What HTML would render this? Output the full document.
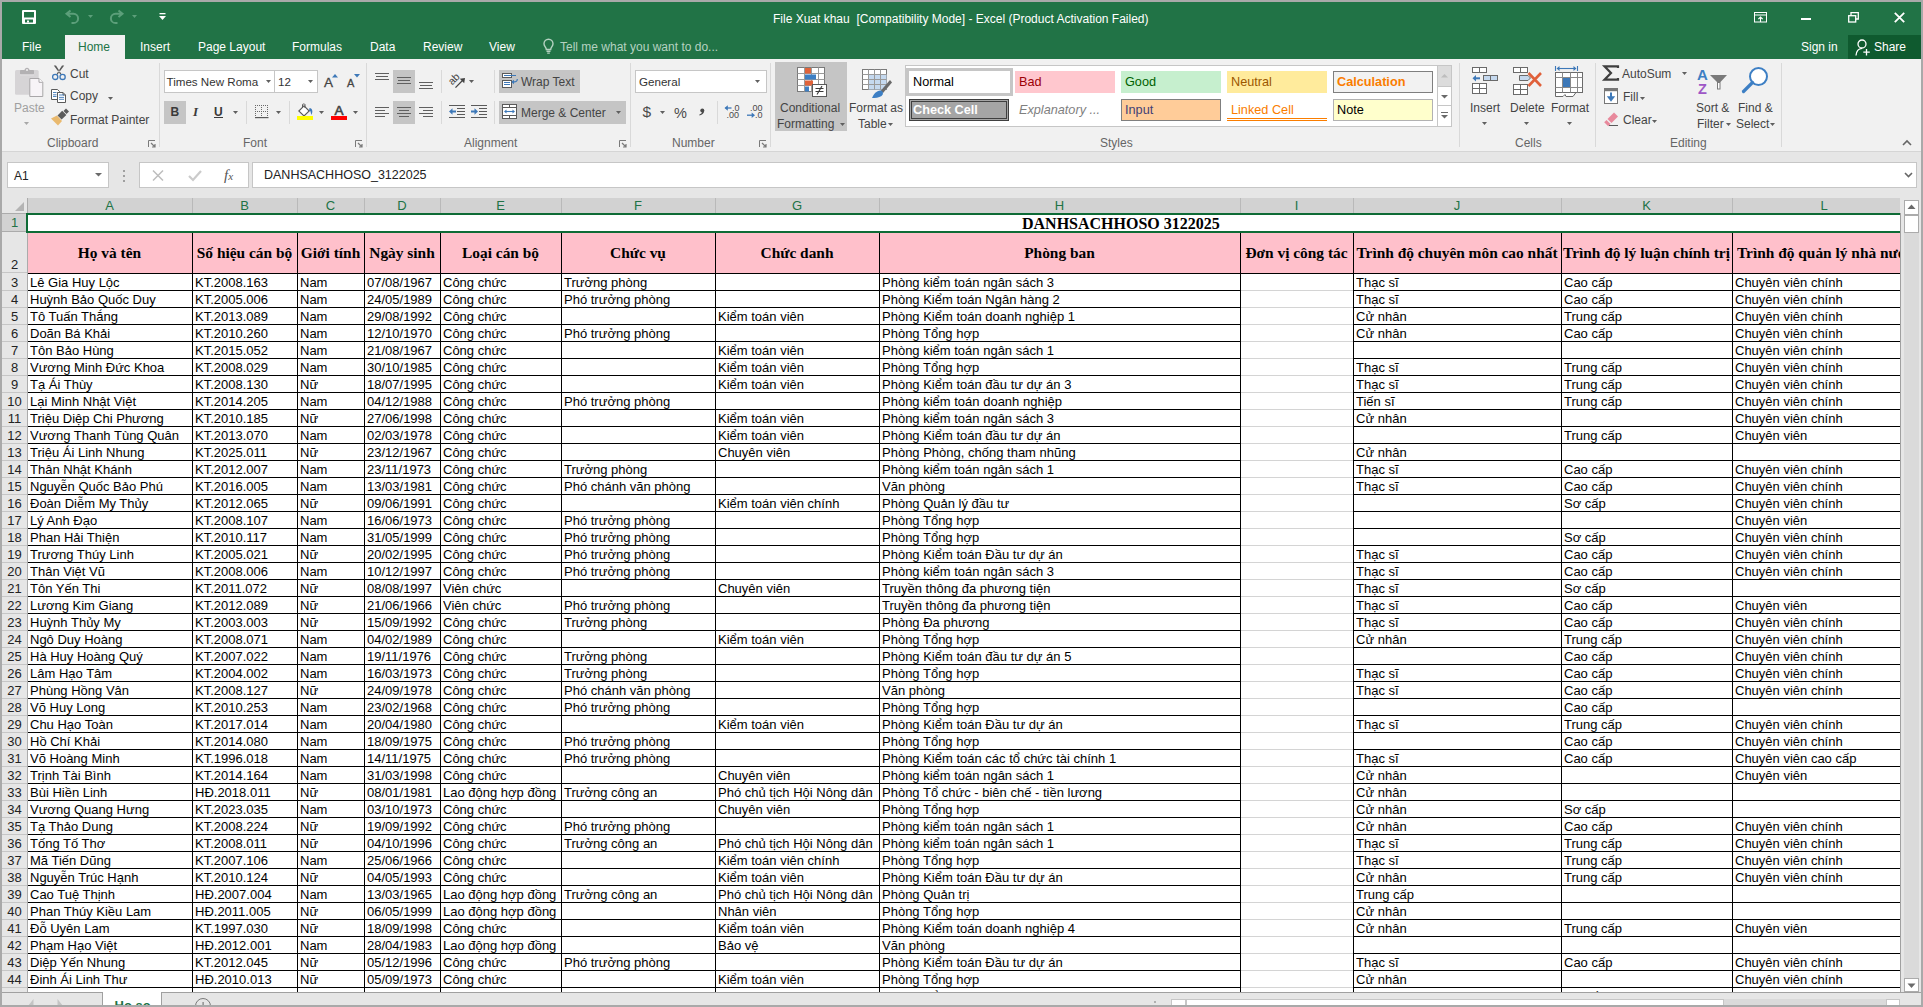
<!DOCTYPE html><html><head><meta charset="utf-8"><style>
html,body{margin:0;padding:0;}
body{width:1923px;height:1007px;overflow:hidden;position:relative;background:#a9a9a9;font-family:"Liberation Sans",sans-serif;}
.t{position:absolute;white-space:pre;}
.r{position:absolute;}
.s{position:absolute;overflow:visible;}
</style></head><body>
<div class="r" style="left:2px;top:2px;width:1919px;height:57px;background:#217346;"></div>
<div class="r" style="left:2px;top:59px;width:1919px;height:92px;background:#f1f1f1;"></div>
<div class="r" style="left:2px;top:151px;width:1919px;height:1px;background:#d5d5d5;"></div>
<div class="r" style="left:2px;top:152px;width:1919px;height:46px;background:#e6e6e6;"></div>
<div class="t" style="left:773px;top:12.84px;font-size:12px;line-height:12px;color:#ffffff;font-weight:normal;font-family:'Liberation Sans', sans-serif;font-style:normal;">File Xuat khau  [Compatibility Mode] - Excel (Product Activation Failed)</div>
<div class="r" style="left:65px;top:35px;width:60px;height:24px;background:#f1f1f1;"></div>
<div class="t" style="left:22px;top:40.84px;font-size:12px;line-height:12px;color:#fff;font-weight:normal;font-family:'Liberation Sans', sans-serif;font-style:normal;">File</div>
<div class="t" style="left:78px;top:40.84px;font-size:12px;line-height:12px;color:#217346;font-weight:normal;font-family:'Liberation Sans', sans-serif;font-style:normal;">Home</div>
<div class="t" style="left:140px;top:40.84px;font-size:12px;line-height:12px;color:#fff;font-weight:normal;font-family:'Liberation Sans', sans-serif;font-style:normal;">Insert</div>
<div class="t" style="left:198px;top:40.84px;font-size:12px;line-height:12px;color:#fff;font-weight:normal;font-family:'Liberation Sans', sans-serif;font-style:normal;">Page Layout</div>
<div class="t" style="left:292px;top:40.84px;font-size:12px;line-height:12px;color:#fff;font-weight:normal;font-family:'Liberation Sans', sans-serif;font-style:normal;">Formulas</div>
<div class="t" style="left:370px;top:40.84px;font-size:12px;line-height:12px;color:#fff;font-weight:normal;font-family:'Liberation Sans', sans-serif;font-style:normal;">Data</div>
<div class="t" style="left:423px;top:40.84px;font-size:12px;line-height:12px;color:#fff;font-weight:normal;font-family:'Liberation Sans', sans-serif;font-style:normal;">Review</div>
<div class="t" style="left:489px;top:40.84px;font-size:12px;line-height:12px;color:#fff;font-weight:normal;font-family:'Liberation Sans', sans-serif;font-style:normal;">View</div>
<div class="t" style="left:560px;top:40.84px;font-size:12px;line-height:12px;color:#b5d2c1;font-weight:normal;font-family:'Liberation Sans', sans-serif;font-style:normal;">Tell me what you want to do...</div>
<div class="t" style="left:1801px;top:40.84px;font-size:12px;line-height:12px;color:#fff;font-weight:normal;font-family:'Liberation Sans', sans-serif;font-style:normal;">Sign in</div>
<div class="r" style="left:1848px;top:35px;width:73px;height:24px;background:#0f5a2f;"></div>
<div class="t" style="left:1874px;top:40.84px;font-size:12px;line-height:12px;color:#fff;font-weight:normal;font-family:'Liberation Sans', sans-serif;font-style:normal;">Share</div>
<svg class="s" style="left:22px;top:10px;" width="14" height="14" viewBox="0 0 14 14"><rect x="0" y="0" width="14" height="14" rx="1" fill="#fff"/><rect x="2" y="2" width="10" height="5.5" fill="#217346"/><rect x="3" y="9.5" width="8" height="3" fill="#217346"/><rect x="5" y="10.5" width="2" height="2" fill="#fff"/></svg>
<svg class="s" style="left:65px;top:10px;" width="15" height="14" viewBox="0 0 15 14"><path d="M5.5,0.5 L1.5,3.8 L5.5,7.1 M1.5,3.8 H8.5 A4.6,4.6 0 0 1 8.5,13 H6.5" fill="none" stroke="#5c9f7a" stroke-width="2"/></svg>
<svg class="s" style="left:88px;top:15px;" width="5" height="3" viewBox="0 0 5 3"><polygon points="0,0 5,0 2.5,3" fill="#5c9f7a"/></svg>
<svg class="s" style="left:109px;top:10px;" width="15" height="14" viewBox="0 0 15 14"><path d="M9.5,0.5 L13.5,3.8 L9.5,7.1 M13.5,3.8 H6.5 A4.6,4.6 0 0 0 6.5,13 H8.5" fill="none" stroke="#5c9f7a" stroke-width="2"/></svg>
<svg class="s" style="left:132px;top:15px;" width="5" height="3" viewBox="0 0 5 3"><polygon points="0,0 5,0 2.5,3" fill="#5c9f7a"/></svg>
<svg class="s" style="left:159px;top:13px;" width="7" height="8" viewBox="0 0 7 8"><rect x="0.5" y="0" width="6" height="1.3" fill="#fff"/><polygon points="0,3 7,3 3.5,7" fill="#fff"/></svg>
<svg class="s" style="left:1754px;top:12px;" width="14" height="11" viewBox="0 0 14 11"><rect x="0.5" y="0.5" width="12" height="9.5" fill="none" stroke="#fff" stroke-width="1"/><path d="M0.5,3 H12.5" stroke="#fff" stroke-width="1"/><path d="M6.5,10 V5 M4.3,7.2 L6.5,5 L8.7,7.2" fill="none" stroke="#fff" stroke-width="1.1"/></svg>
<div class="r" style="left:1801px;top:18px;width:10px;height:2px;background:#fff;"></div>
<svg class="s" style="left:1848px;top:12px;" width="11" height="11" viewBox="0 0 11 11"><rect x="0.7" y="3.7" width="7" height="6.3" fill="none" stroke="#fff" stroke-width="1.3"/><path d="M3,3.5 V0.7 H10.3 V7 H7.8" fill="none" stroke="#fff" stroke-width="1.3"/></svg>
<svg class="s" style="left:1894px;top:12px;" width="11" height="11" viewBox="0 0 11 11"><path d="M0.8,0.8 L10.2,10.2 M10.2,0.8 L0.8,10.2" stroke="#fff" stroke-width="1.8"/></svg>
<svg class="s" style="left:543px;top:39px;" width="11" height="15" viewBox="0 0 11 15"><path d="M3.3,10.5 C3.3,8.3 1,7.5 1,4.8 A4.5,4.5 0 0 1 10,4.8 C10,7.5 7.7,8.3 7.7,10.5 Z" fill="none" stroke="#b5d2c1" stroke-width="1.4"/><path d="M3.5,12.3 H7.5 M4.2,14.1 H6.8" stroke="#b5d2c1" stroke-width="1.4"/></svg>
<svg class="s" style="left:1855px;top:39px;" width="16" height="17" viewBox="0 0 16 17"><circle cx="7" cy="5" r="4" fill="none" stroke="#fff" stroke-width="1.3"/><path d="M1,16.5 C1.3,12 3.5,9.6 7,9.3" fill="none" stroke="#fff" stroke-width="1.3"/><path d="M11.5,10 V16.5 M8.3,13.2 H14.8" stroke="#fff" stroke-width="1.3"/></svg>
<svg class="s" style="left:14px;top:66px;" width="31" height="32" viewBox="0 0 31 32"><rect x="1" y="4" width="23.7" height="24.7" rx="1.5" fill="#d6d4d6"/><rect x="6" y="4" width="14" height="4.5" rx="0.8" fill="#b3b1b3"/><rect x="6" y="8.5" width="14" height="0.8" fill="#e6e4e6"/><path d="M10.5,4.5 C10.5,0.8 15.5,0.8 15.5,4.5 Z" fill="#b3b1b3"/><circle cx="13" cy="4" r="1" fill="#f1f1f1"/><path d="M15.8,12.5 H25 L28.8,16.3 V30.5 H15.8 Z" fill="#f7f4f7" stroke="#a9a7a9" stroke-width="1"/><path d="M25,12.5 V16.3 H28.8" fill="#fff" stroke="#a9a7a9" stroke-width="1"/></svg>
<div class="t" style="left:14px;top:101.84px;font-size:12px;line-height:12px;color:#a0a0a0;font-weight:normal;font-family:'Liberation Sans', sans-serif;font-style:normal;">Paste</div>
<svg class="s" style="left:24px;top:122px;" width="5" height="3" viewBox="0 0 5 3"><polygon points="0,0 5,0 2.5,3" fill="#a8a8a8"/></svg>
<svg class="s" style="left:51px;top:64px;" width="17" height="17" viewBox="0 0 17 17"><path d="M2.8,1.5 L5,1.5 L10.6,10.2 L9.6,10.8 Z M13.2,1.5 L11,1.5 L5.4,10.2 L6.4,10.8 Z" fill="#5a5a5a"/><circle cx="4.2" cy="12.9" r="2.6" fill="none" stroke="#3d78b8" stroke-width="1.3"/><circle cx="11.6" cy="12.9" r="2.6" fill="none" stroke="#3d78b8" stroke-width="1.3"/></svg>
<div class="t" style="left:70px;top:67.84px;font-size:12px;line-height:12px;color:#444444;font-weight:normal;font-family:'Liberation Sans', sans-serif;font-style:normal;">Cut</div>
<svg class="s" style="left:50px;top:88px;" width="17" height="16" viewBox="0 0 17 16"><path d="M1.5,11.5 V1.5 H7.5 L9.5,3.5 V4.5 H7.5 V11.5 H1.5 Z" fill="#fff" stroke="#5a5a5a" stroke-width="1"/><path d="M7.5,4.5 H13 L15.5,7 V14.5 H7.5 Z" fill="#fff" stroke="#5a5a5a" stroke-width="1"/><path d="M13,4.5 V7 H15.5" fill="none" stroke="#5a5a5a" stroke-width="1"/><path d="M3,4.5 H6.5 M3,6.8 H6.5 M3,8.5 H6.5 M9,7 H14 M9,9.4 H14 M9,11.3 H14" stroke="#3d78b8" stroke-width="0.9"/></svg>
<div class="t" style="left:70px;top:89.84px;font-size:12px;line-height:12px;color:#444444;font-weight:normal;font-family:'Liberation Sans', sans-serif;font-style:normal;">Copy</div>
<svg class="s" style="left:108px;top:97px;" width="5" height="3" viewBox="0 0 5 3"><polygon points="0,0 5,0 2.5,3" fill="#5f5f5f"/></svg>
<svg class="s" style="left:48px;top:108px;" width="24" height="22" viewBox="0 0 24 22"><polygon points="3,10.5 9,7.5 14,13 10,17.5" fill="#e9b96e"/><polygon points="9.5,7.5 14.2,2.8 18.4,7 13.6,11.6" fill="#5c5c5c"/><polygon points="15.5,3 18,0.5 21,3.5 18.5,6" fill="#5c5c5c"/></svg>
<div class="t" style="left:70px;top:113.84px;font-size:12px;line-height:12px;color:#444444;font-weight:normal;font-family:'Liberation Sans', sans-serif;font-style:normal;">Format Painter</div>
<div class="t" style="left:47px;top:136.84px;font-size:12px;line-height:12px;color:#666666;font-weight:normal;font-family:'Liberation Sans', sans-serif;font-style:normal;">Clipboard</div>
<svg class="s" style="left:148px;top:140px;" width="8" height="8" viewBox="0 0 8 8"><path d="M0.5,7 V0.5 H7" fill="none" stroke="#7a7a7a" stroke-width="1"/><path d="M3,3 L7,7 M7,4 V7 H4" fill="none" stroke="#7a7a7a" stroke-width="1.2"/></svg>
<div class="r" style="left:159px;top:63px;width:1px;height:84px;background:#d9d9d9;"></div>
<div class="r" style="left:164px;top:70px;width:111px;height:23px;background:#fff;box-sizing:border-box;border:1px solid #c6c6c6;"></div>
<div class="r" style="left:274px;top:70px;width:44px;height:23px;background:#fff;box-sizing:border-box;border:1px solid #c6c6c6;"></div>
<div class="t" style="left:166.5px;top:76.18px;font-size:11.6px;line-height:11.6px;color:#333;font-weight:normal;font-family:'Liberation Sans', sans-serif;font-style:normal;">Times New Roma</div>
<svg class="s" style="left:266px;top:80px;" width="5" height="3" viewBox="0 0 5 3"><polygon points="0,0 5,0 2.5,3" fill="#5f5f5f"/></svg>
<div class="t" style="left:278px;top:76.18px;font-size:11.6px;line-height:11.6px;color:#333;font-weight:normal;font-family:'Liberation Sans', sans-serif;font-style:normal;">12</div>
<svg class="s" style="left:308px;top:80px;" width="5" height="3" viewBox="0 0 5 3"><polygon points="0,0 5,0 2.5,3" fill="#5f5f5f"/></svg>
<div class="t" style="left:324px;top:75.57px;font-size:13.5px;line-height:13.5px;color:#444444;font-weight:normal;font-family:'Liberation Sans', sans-serif;font-style:normal;-webkit-text-stroke:0.3px #444;">A</div>
<svg class="s" style="left:332px;top:73.5px;" width="6" height="4" viewBox="0 0 6 4"><polygon points="0,3.5 6,3.5 3,0" fill="#3d78b8"/></svg>
<div class="t" style="left:347px;top:77.69px;font-size:11px;line-height:11px;color:#444444;font-weight:normal;font-family:'Liberation Sans', sans-serif;font-style:normal;-webkit-text-stroke:0.3px #444;">A</div>
<svg class="s" style="left:354px;top:74px;" width="6" height="4" viewBox="0 0 6 4"><polygon points="0,0 6,0 3,3.5" fill="#3d78b8"/></svg>
<div class="r" style="left:164px;top:101px;width:22px;height:23px;background:#c5c5c5;"></div>
<div class="t" style="left:170.5px;top:105.84px;font-size:12px;line-height:12px;color:#3a3a3a;font-weight:bold;font-family:'Liberation Sans', sans-serif;font-style:normal;">B</div>
<div class="t" style="left:193px;top:105.11px;font-size:13px;line-height:13px;color:#3a3a3a;font-weight:bold;font-family:'Liberation Serif', serif;font-style:italic;">I</div>
<div class="t" style="left:214px;top:105.84px;font-size:12px;line-height:12px;color:#3a3a3a;font-weight:bold;font-family:'Liberation Sans', sans-serif;font-style:normal;">U</div>
<div class="r" style="left:214px;top:117px;width:9px;height:1px;background:#3a3a3a;"></div>
<svg class="s" style="left:233px;top:111px;" width="5" height="3" viewBox="0 0 5 3"><polygon points="0,0 5,0 2.5,3" fill="#5f5f5f"/></svg>
<div class="r" style="left:246px;top:101px;width:1px;height:23px;background:#d9d9d9;"></div>
<svg class="s" style="left:255px;top:105px;" width="14" height="14" viewBox="0 0 14 14"><rect x="0" y="0" width="1" height="1" fill="#6a6a6a"/><rect x="0" y="6" width="1" height="1" fill="#6a6a6a"/><rect x="2" y="0" width="1" height="1" fill="#6a6a6a"/><rect x="2" y="6" width="1" height="1" fill="#6a6a6a"/><rect x="4" y="0" width="1" height="1" fill="#6a6a6a"/><rect x="4" y="6" width="1" height="1" fill="#6a6a6a"/><rect x="6" y="0" width="1" height="1" fill="#6a6a6a"/><rect x="6" y="6" width="1" height="1" fill="#6a6a6a"/><rect x="8" y="0" width="1" height="1" fill="#6a6a6a"/><rect x="8" y="6" width="1" height="1" fill="#6a6a6a"/><rect x="10" y="0" width="1" height="1" fill="#6a6a6a"/><rect x="10" y="6" width="1" height="1" fill="#6a6a6a"/><rect x="12" y="0" width="1" height="1" fill="#6a6a6a"/><rect x="12" y="6" width="1" height="1" fill="#6a6a6a"/><rect x="0" y="2" width="1" height="1" fill="#6a6a6a"/><rect x="6" y="2" width="1" height="1" fill="#6a6a6a"/><rect x="12" y="2" width="1" height="1" fill="#6a6a6a"/><rect x="0" y="4" width="1" height="1" fill="#6a6a6a"/><rect x="6" y="4" width="1" height="1" fill="#6a6a6a"/><rect x="12" y="4" width="1" height="1" fill="#6a6a6a"/><rect x="0" y="6" width="1" height="1" fill="#6a6a6a"/><rect x="6" y="6" width="1" height="1" fill="#6a6a6a"/><rect x="12" y="6" width="1" height="1" fill="#6a6a6a"/><rect x="0" y="8" width="1" height="1" fill="#6a6a6a"/><rect x="6" y="8" width="1" height="1" fill="#6a6a6a"/><rect x="12" y="8" width="1" height="1" fill="#6a6a6a"/><rect x="0" y="10" width="1" height="1" fill="#6a6a6a"/><rect x="6" y="10" width="1" height="1" fill="#6a6a6a"/><rect x="12" y="10" width="1" height="1" fill="#6a6a6a"/><rect x="0" y="12" width="13.5" height="1.2" fill="#5a5a5a"/></svg>
<svg class="s" style="left:276px;top:111px;" width="5" height="3" viewBox="0 0 5 3"><polygon points="0,0 5,0 2.5,3" fill="#5f5f5f"/></svg>
<div class="r" style="left:289px;top:101px;width:1px;height:23px;background:#d9d9d9;"></div>
<svg class="s" style="left:296px;top:103px;" width="18" height="13" viewBox="0 0 18 13"><path d="M8,2.8 L2.8,8 L8,13 L13.2,8 Z" fill="#fff" stroke="#5a5a5a" stroke-width="1.1"/><path d="M6.5,5 V1.5 C6.5,0.8 9,0.8 9,1.5 V5" fill="none" stroke="#5a5a5a" stroke-width="1"/><path d="M13.5,5 C16.5,5.5 17.3,8.5 15.3,12 L14.5,8.3 L13,8 Z" fill="#3d78b8"/></svg>
<div class="r" style="left:297px;top:116px;width:16px;height:4px;background:#ffff00;"></div>
<svg class="s" style="left:319px;top:111px;" width="5" height="3" viewBox="0 0 5 3"><polygon points="0,0 5,0 2.5,3" fill="#5f5f5f"/></svg>
<div class="t" style="left:334.5px;top:104.07px;font-size:13.5px;line-height:13.5px;color:#444;font-weight:normal;font-family:'Liberation Sans', sans-serif;font-style:normal;-webkit-text-stroke:0.6px #444;">A</div>
<div class="r" style="left:331px;top:116px;width:16px;height:4px;background:#ff0000;"></div>
<svg class="s" style="left:353px;top:111px;" width="5" height="3" viewBox="0 0 5 3"><polygon points="0,0 5,0 2.5,3" fill="#5f5f5f"/></svg>
<div class="t" style="left:243px;top:136.84px;font-size:12px;line-height:12px;color:#666666;font-weight:normal;font-family:'Liberation Sans', sans-serif;font-style:normal;">Font</div>
<svg class="s" style="left:355px;top:140px;" width="8" height="8" viewBox="0 0 8 8"><path d="M0.5,7 V0.5 H7" fill="none" stroke="#7a7a7a" stroke-width="1"/><path d="M3,3 L7,7 M7,4 V7 H4" fill="none" stroke="#7a7a7a" stroke-width="1.2"/></svg>
<div class="r" style="left:366px;top:63px;width:1px;height:84px;background:#d9d9d9;"></div>
<div class="r" style="left:393px;top:70px;width:22px;height:23px;background:#c5c5c5;"></div>
<div class="r" style="left:393px;top:101px;width:22px;height:23px;background:#c5c5c5;"></div>
<svg class="s" style="left:375px;top:0px;" width="16" height="130" viewBox="0 0 16 130"><rect x="0" y="73" width="14" height="1" fill="#606060"/><rect x="1" y="76" width="12" height="1" fill="#606060"/><rect x="0" y="79" width="14" height="1" fill="#606060"/></svg>
<svg class="s" style="left:397px;top:0px;" width="16" height="130" viewBox="0 0 16 130"><rect x="0" y="77" width="14" height="1" fill="#606060"/><rect x="1" y="80" width="12" height="1" fill="#606060"/><rect x="0" y="83" width="14" height="1" fill="#606060"/></svg>
<svg class="s" style="left:419px;top:0px;" width="16" height="130" viewBox="0 0 16 130"><rect x="0" y="82" width="14" height="1" fill="#606060"/><rect x="1" y="85" width="12" height="1" fill="#606060"/><rect x="0" y="88" width="14" height="1" fill="#606060"/></svg>
<svg class="s" style="left:375px;top:0px;" width="16" height="130" viewBox="0 0 16 130"><rect x="0" y="107" width="14" height="1" fill="#606060"/><rect x="0" y="110" width="10" height="1" fill="#606060"/><rect x="0" y="113" width="14" height="1" fill="#606060"/><rect x="0" y="116" width="10" height="1" fill="#606060"/></svg>
<svg class="s" style="left:397px;top:0px;" width="16" height="130" viewBox="0 0 16 130"><rect x="0" y="107" width="14" height="1" fill="#606060"/><rect x="2" y="110" width="10" height="1" fill="#606060"/><rect x="0" y="113" width="14" height="1" fill="#606060"/><rect x="2" y="116" width="10" height="1" fill="#606060"/></svg>
<svg class="s" style="left:419px;top:0px;" width="16" height="130" viewBox="0 0 16 130"><rect x="0" y="107" width="14" height="1" fill="#606060"/><rect x="4" y="110" width="10" height="1" fill="#606060"/><rect x="0" y="113" width="14" height="1" fill="#606060"/><rect x="4" y="116" width="10" height="1" fill="#606060"/></svg>
<div class="r" style="left:441px;top:70px;width:1px;height:23px;background:#d9d9d9;"></div>
<div class="r" style="left:441px;top:101px;width:1px;height:23px;background:#d9d9d9;"></div>
<svg class="s" style="left:448px;top:72px;" width="18" height="17" viewBox="0 0 18 17"><text x="0" y="0" transform="translate(4.2,13.6) rotate(-45)" font-family="Liberation Sans" font-size="10.5" fill="#444">ab</text><path d="M7.5,15.6 L15,8" fill="none" stroke="#444" stroke-width="1.3"/><path d="M17,6 L11.8,6.8 L16.2,11.2 Z" fill="#444"/></svg>
<svg class="s" style="left:469px;top:80px;" width="5" height="3" viewBox="0 0 5 3"><polygon points="0,0 5,0 2.5,3" fill="#5f5f5f"/></svg>
<div class="r" style="left:494px;top:70px;width:1px;height:23px;background:#d9d9d9;"></div>
<div class="r" style="left:494px;top:101px;width:1px;height:23px;background:#d9d9d9;"></div>
<svg class="s" style="left:449px;top:104px;" width="17" height="15" viewBox="0 0 17 15"><path d="M0,1.5 H16 M8,4.5 H16 M8,7.5 H16 M8,10.5 H16 M0,13.5 H16" stroke="#5a5a5a" stroke-width="1"/><path d="M2.5,7.5 H7" stroke="#3d78b8" stroke-width="2"/><path d="M0,7.5 L3.5,4.2 V10.8 Z" fill="#3d78b8"/></svg>
<svg class="s" style="left:471px;top:104px;" width="17" height="15" viewBox="0 0 17 15"><path d="M0,1.5 H16 M8,4.5 H16 M8,7.5 H16 M8,10.5 H16 M0,13.5 H16" stroke="#5a5a5a" stroke-width="1"/><path d="M0,7.5 H4.5" stroke="#3d78b8" stroke-width="2"/><path d="M7,7.5 L3.5,4.2 V10.8 Z" fill="#3d78b8"/></svg>
<div class="r" style="left:499px;top:70px;width:81px;height:23px;background:#c5c5c5;"></div>
<svg class="s" style="left:502px;top:73px;" width="17" height="16" viewBox="0 0 17 16"><rect x="0.5" y="0.5" width="9" height="4" fill="#fff" stroke="#5a5a5a"/><rect x="0.5" y="7.5" width="9" height="7" fill="#fff" stroke="#5a5a5a"/><path d="M2,2.5 H14 M2,9.5 H8 M2,11.5 H8" stroke="#3d78b8" stroke-width="1"/><path d="M15.3,6 C15.5,8.5 13.5,9 10.5,9" fill="none" stroke="#3d78b8" stroke-width="1.2"/><path d="M9.3,9 L12,6.8 L12,11.2 Z" fill="#3d78b8"/></svg>
<div class="t" style="left:521px;top:75.84px;font-size:12px;line-height:12px;color:#444444;font-weight:normal;font-family:'Liberation Sans', sans-serif;font-style:normal;">Wrap Text</div>
<div class="r" style="left:499px;top:101px;width:127px;height:23px;background:#c5c5c5;"></div>
<svg class="s" style="left:502px;top:104px;" width="16" height="15" viewBox="0 0 16 15"><rect x="0.5" y="0.5" width="14" height="14" fill="#fff" stroke="#5a5a5a"/><path d="M0.5,3.5 H14.5 M0.5,11.5 H14.5 M7.5,0.5 V3.5 M7.5,11.5 V14.5" stroke="#5a5a5a" stroke-width="1"/><path d="M3.5,7.5 H11.5" stroke="#3d78b8" stroke-width="1.1"/><path d="M2,7.5 L4.5,5.5 V9.5 Z M13,7.5 L10.5,5.5 V9.5 Z" fill="#3d78b8"/></svg>
<div class="t" style="left:521px;top:106.84px;font-size:12px;line-height:12px;color:#444444;font-weight:normal;font-family:'Liberation Sans', sans-serif;font-style:normal;">Merge &amp; Center</div>
<svg class="s" style="left:616px;top:111px;" width="5" height="3" viewBox="0 0 5 3"><polygon points="0,0 5,0 2.5,3" fill="#5f5f5f"/></svg>
<div class="t" style="left:464px;top:136.84px;font-size:12px;line-height:12px;color:#666666;font-weight:normal;font-family:'Liberation Sans', sans-serif;font-style:normal;">Alignment</div>
<svg class="s" style="left:619px;top:140px;" width="8" height="8" viewBox="0 0 8 8"><path d="M0.5,7 V0.5 H7" fill="none" stroke="#7a7a7a" stroke-width="1"/><path d="M3,3 L7,7 M7,4 V7 H4" fill="none" stroke="#7a7a7a" stroke-width="1.2"/></svg>
<div class="r" style="left:630px;top:63px;width:1px;height:84px;background:#d9d9d9;"></div>
<div class="r" style="left:635px;top:70px;width:132px;height:23px;background:#fff;box-sizing:border-box;border:1px solid #c6c6c6;"></div>
<div class="t" style="left:639px;top:76.18px;font-size:11.6px;line-height:11.6px;color:#333;font-weight:normal;font-family:'Liberation Sans', sans-serif;font-style:normal;">General</div>
<svg class="s" style="left:755px;top:80px;" width="5" height="3" viewBox="0 0 5 3"><polygon points="0,0 5,0 2.5,3" fill="#5f5f5f"/></svg>
<div class="t" style="left:642.5px;top:104.38px;font-size:15.5px;line-height:15.5px;color:#4a4a4a;font-weight:normal;font-family:'Liberation Sans', sans-serif;font-style:normal;">$</div>
<svg class="s" style="left:660px;top:111px;" width="5" height="3" viewBox="0 0 5 3"><polygon points="0,0 5,0 2.5,3" fill="#5f5f5f"/></svg>
<div class="t" style="left:674px;top:105.73px;font-size:14.5px;line-height:14.5px;color:#4a4a4a;font-weight:normal;font-family:'Liberation Sans', sans-serif;font-style:normal;">%</div>
<svg class="s" style="left:698px;top:108px;" width="7" height="8" viewBox="0 0 7 8"><circle cx="4.3" cy="2.6" r="2" fill="#4a4a4a"/><path d="M6.2,2.8 C6.2,5 4.5,6.8 1.5,7.5 L1.2,6.8 C3,6 4,5 4.2,3.8 Z" fill="#4a4a4a"/></svg>
<div class="r" style="left:717px;top:101px;width:1px;height:23px;background:#d9d9d9;"></div>
<svg class="s" style="left:724px;top:104px;" width="17" height="15" viewBox="0 0 17 15"><text x="8" y="7" font-family="Liberation Sans" font-size="9" fill="#4a4a4a">.0</text><text x="2.5" y="14.2" font-family="Liberation Sans" font-size="9" fill="#4a4a4a">.00</text><path d="M1.5,4 H7.5" stroke="#3d78b8" stroke-width="1.3"/><path d="M0.5,4 L3.8,1.2 V6.8 Z" fill="#3d78b8"/></svg>
<svg class="s" style="left:746px;top:104px;" width="17" height="15" viewBox="0 0 17 15"><text x="4" y="7" font-family="Liberation Sans" font-size="9" fill="#4a4a4a">.00</text><text x="9" y="14.2" font-family="Liberation Sans" font-size="9" fill="#4a4a4a">.0</text><path d="M1,11.2 H7" stroke="#3d78b8" stroke-width="1.3"/><path d="M9,11.2 L5.7,8.4 V14 Z" fill="#3d78b8"/></svg>
<div class="t" style="left:672px;top:136.84px;font-size:12px;line-height:12px;color:#666666;font-weight:normal;font-family:'Liberation Sans', sans-serif;font-style:normal;">Number</div>
<svg class="s" style="left:759px;top:140px;" width="8" height="8" viewBox="0 0 8 8"><path d="M0.5,7 V0.5 H7" fill="none" stroke="#7a7a7a" stroke-width="1"/><path d="M3,3 L7,7 M7,4 V7 H4" fill="none" stroke="#7a7a7a" stroke-width="1.2"/></svg>
<div class="r" style="left:770px;top:63px;width:1px;height:84px;background:#d9d9d9;"></div>
<div class="r" style="left:775px;top:62px;width:72px;height:69px;background:#c5c5c5;"></div>
<svg class="s" style="left:797px;top:67px;" width="30" height="30" viewBox="0 0 30 30"><rect x="0.5" y="0.5" width="27" height="24" fill="#fff" stroke="#7a7a7a"/><rect x="7" y="0.5" width="1" height="24" fill="#9a9a9a"/><rect x="14" y="0.5" width="1" height="24" fill="#9a9a9a"/><rect x="21" y="0.5" width="1" height="24" fill="#9a9a9a"/><rect x="0.5" y="6" width="27" height="1" fill="#9a9a9a"/><rect x="0.5" y="12" width="27" height="1" fill="#9a9a9a"/><rect x="0.5" y="18" width="27" height="1" fill="#9a9a9a"/><rect x="8" y="1" width="6" height="5.5" fill="#e0633a"/><rect x="8" y="7.5" width="11" height="5" fill="#3d7fc4"/><rect x="8" y="13.5" width="8" height="5" fill="#e0633a"/><rect x="8" y="19.5" width="4" height="5" fill="#3d7fc4"/><rect x="15.5" y="17.5" width="14" height="12" fill="#fff" stroke="#5a5a5a"/><path d="M18.5,21.5 H26.5 M18.5,24.5 H26.5 M25,19 L20,27.5" stroke="#3a3a3a" stroke-width="1.1"/></svg>
<div class="t" style="left:780px;top:101.84px;font-size:12px;line-height:12px;color:#444444;font-weight:normal;font-family:'Liberation Sans', sans-serif;font-style:normal;">Conditional</div>
<div class="t" style="left:777px;top:117.84px;font-size:12px;line-height:12px;color:#444444;font-weight:normal;font-family:'Liberation Sans', sans-serif;font-style:normal;">Formatting</div>
<svg class="s" style="left:840px;top:123px;" width="5" height="3" viewBox="0 0 5 3"><polygon points="0,0 5,0 2.5,3" fill="#5f5f5f"/></svg>
<svg class="s" style="left:862px;top:69px;" width="30" height="29" viewBox="0 0 30 29"><rect x="0.5" y="0.5" width="24" height="20" fill="#fff" stroke="#7a7a7a"/><rect x="6.5" y="5.5" width="18" height="15" fill="#c5d9ef"/><rect x="6" y="0.5" width="1" height="20" fill="#9a9a9a"/><rect x="12" y="0.5" width="1" height="20" fill="#9a9a9a"/><rect x="18" y="0.5" width="1" height="20" fill="#9a9a9a"/><rect x="0.5" y="5" width="24" height="1" fill="#9a9a9a"/><rect x="0.5" y="10" width="24" height="1" fill="#9a9a9a"/><rect x="0.5" y="15" width="24" height="1" fill="#9a9a9a"/><path d="M18.5,22 L28,11 L30,13.5 L21,24 Z" fill="#6a6a6a"/><path d="M10,29 C11.5,25 15,21 19,21.5 C21.5,22.5 21.5,25.5 19.5,27 C17,28.8 13,29 10,29 Z" fill="#3d7fc4"/></svg>
<div class="t" style="left:849px;top:101.84px;font-size:12px;line-height:12px;color:#444444;font-weight:normal;font-family:'Liberation Sans', sans-serif;font-style:normal;">Format as</div>
<div class="t" style="left:858px;top:117.84px;font-size:12px;line-height:12px;color:#444444;font-weight:normal;font-family:'Liberation Sans', sans-serif;font-style:normal;">Table</div>
<svg class="s" style="left:888px;top:123px;" width="5" height="3" viewBox="0 0 5 3"><polygon points="0,0 5,0 2.5,3" fill="#5f5f5f"/></svg>
<div class="r" style="left:905px;top:65px;width:533px;height:62px;background:#fff;box-sizing:border-box;border:1px solid #c6c6c6;"></div>
<div class="r" style="left:906px;top:68px;width:107px;height:28px;background:#fff;box-sizing:border-box;border:3px solid #c6c6c6;"></div>
<div class="t" style="left:913px;top:76.25px;font-size:12.7px;line-height:12.7px;color:#000;font-weight:normal;font-family:'Liberation Sans', sans-serif;font-style:normal;">Normal</div>
<div class="r" style="left:1015px;top:71px;width:100px;height:22px;background:#ffc7ce;"></div>
<div class="t" style="left:1019px;top:76.25px;font-size:12.7px;line-height:12.7px;color:#9c0006;font-weight:normal;font-family:'Liberation Sans', sans-serif;font-style:normal;">Bad</div>
<div class="r" style="left:1121px;top:71px;width:100px;height:22px;background:#c6efce;"></div>
<div class="t" style="left:1125px;top:76.25px;font-size:12.7px;line-height:12.7px;color:#006100;font-weight:normal;font-family:'Liberation Sans', sans-serif;font-style:normal;">Good</div>
<div class="r" style="left:1227px;top:71px;width:100px;height:22px;background:#ffeb9c;"></div>
<div class="t" style="left:1231px;top:76.25px;font-size:12.7px;line-height:12.7px;color:#9c5700;font-weight:normal;font-family:'Liberation Sans', sans-serif;font-style:normal;">Neutral</div>
<div class="r" style="left:1333px;top:71px;width:100px;height:22px;background:#f2f2f2;box-sizing:border-box;border:1px solid #7f7f7f;"></div>
<div class="t" style="left:1337px;top:76.25px;font-size:12.7px;line-height:12.7px;color:#fa7d00;font-weight:bold;font-family:'Liberation Sans', sans-serif;font-style:normal;">Calculation</div>
<div class="r" style="left:909px;top:99px;width:100px;height:22px;background:#a5a5a5;box-sizing:border-box;border:3px double #3f3f3f;"></div>
<div class="t" style="left:913px;top:104.25px;font-size:12.7px;line-height:12.7px;color:#fff;font-weight:bold;font-family:'Liberation Sans', sans-serif;font-style:normal;">Check Cell</div>
<div class="t" style="left:1019px;top:104.25px;font-size:12.7px;line-height:12.7px;color:#7f7f7f;font-weight:normal;font-family:'Liberation Sans', sans-serif;font-style:italic;">Explanatory ...</div>
<div class="r" style="left:1121px;top:99px;width:100px;height:22px;background:#ffcc99;box-sizing:border-box;border:1px solid #7f7f7f;"></div>
<div class="t" style="left:1125px;top:104.25px;font-size:12.7px;line-height:12.7px;color:#3f3f76;font-weight:normal;font-family:'Liberation Sans', sans-serif;font-style:normal;">Input</div>
<div class="t" style="left:1231px;top:104.25px;font-size:12.7px;line-height:12.7px;color:#fa7d00;font-weight:normal;font-family:'Liberation Sans', sans-serif;font-style:normal;">Linked Cell</div>
<div class="r" style="left:1227px;top:118px;width:100px;height:1px;background:#fa7d00;"></div>
<div class="r" style="left:1227px;top:120px;width:100px;height:1px;background:#fa7d00;"></div>
<div class="r" style="left:1333px;top:99px;width:100px;height:22px;background:#ffffcc;box-sizing:border-box;border:1px solid #b2b2b2;"></div>
<div class="t" style="left:1337px;top:104.25px;font-size:12.7px;line-height:12.7px;color:#000;font-weight:normal;font-family:'Liberation Sans', sans-serif;font-style:normal;">Note</div>
<div class="r" style="left:1437px;top:65px;width:15px;height:62px;background:#fff;box-sizing:border-box;border:1px solid #c6c6c6;"></div>
<div class="r" style="left:1438px;top:66px;width:13px;height:20px;background:#dcdcdc;"></div>
<div class="r" style="left:1438px;top:86px;width:13px;height:1px;background:#c6c6c6;"></div>
<div class="r" style="left:1438px;top:105px;width:13px;height:1px;background:#c6c6c6;"></div>
<svg class="s" style="left:1441px;top:74px;" width="7" height="4" viewBox="0 0 7 4"><polygon points="0,3.5 7,3.5 3.5,0" fill="#bdbdbd"/></svg>
<svg class="s" style="left:1441px;top:95px;" width="7" height="4" viewBox="0 0 7 4"><polygon points="0,0 7,0 3.5,3.5" fill="#6a6a6a"/></svg>
<svg class="s" style="left:1441px;top:112px;" width="7" height="8" viewBox="0 0 7 8"><rect x="0" y="0" width="7" height="1" fill="#6a6a6a"/><polygon points="0,3 7,3 3.5,6.5" fill="#6a6a6a"/></svg>
<div class="t" style="left:1100px;top:136.84px;font-size:12px;line-height:12px;color:#666666;font-weight:normal;font-family:'Liberation Sans', sans-serif;font-style:normal;">Styles</div>
<div class="r" style="left:1459px;top:63px;width:1px;height:84px;background:#d9d9d9;"></div>
<svg class="s" style="left:1471px;top:66px;" width="28" height="29" viewBox="0 0 28 29"><rect x="1.5" y="1.5" width="14" height="5" fill="#fff" stroke="#6a6a6a"/><path d="M8.5,1.5 V6.5" stroke="#6a6a6a"/><rect x="12.5" y="9.5" width="14" height="5" fill="#c5d9ef" stroke="#6a6a6a"/><path d="M19.5,9.5 V14.5" stroke="#6a6a6a"/><path d="M4,12.3 H9" fill="none" stroke="#3d78b8" stroke-width="2"/><path d="M1.5,12.3 L5,9 V15.6 Z" fill="#3d78b8"/><rect x="1.5" y="17.5" width="14" height="10" fill="#fff" stroke="#6a6a6a"/><path d="M8.5,17.5 V27.5 M1.5,22.5 H15.5" stroke="#6a6a6a"/></svg>
<div class="t" style="left:1470px;top:101.84px;font-size:12px;line-height:12px;color:#444444;font-weight:normal;font-family:'Liberation Sans', sans-serif;font-style:normal;">Insert</div>
<svg class="s" style="left:1482px;top:122px;" width="5" height="3" viewBox="0 0 5 3"><polygon points="0,0 5,0 2.5,3" fill="#5f5f5f"/></svg>
<svg class="s" style="left:1512px;top:66px;" width="31" height="30" viewBox="0 0 31 30"><rect x="1.5" y="1.5" width="14" height="5" fill="#fff" stroke="#6a6a6a"/><path d="M8.5,1.5 V6.5" stroke="#6a6a6a"/><path d="M7.5,9.5 H16 L18.5,12 L16,14.5 H7.5 Z" fill="#c5d9ef" stroke="#6a6a6a"/><rect x="1.5" y="18.5" width="14" height="10" fill="#fff" stroke="#6a6a6a"/><path d="M8.5,18.5 V28.5 M1.5,23.5 H15.5" stroke="#6a6a6a"/><path d="M16.5,7 L29,20 M29,7 L16.5,20" stroke="#e0603a" stroke-width="2.6"/></svg>
<div class="t" style="left:1510px;top:101.84px;font-size:12px;line-height:12px;color:#444444;font-weight:normal;font-family:'Liberation Sans', sans-serif;font-style:normal;">Delete</div>
<svg class="s" style="left:1524px;top:122px;" width="5" height="3" viewBox="0 0 5 3"><polygon points="0,0 5,0 2.5,3" fill="#5f5f5f"/></svg>
<svg class="s" style="left:1554px;top:65px;" width="30" height="33" viewBox="0 0 30 33"><path d="M1.5,1 V6 M23.5,1 V6" stroke="#3d78b8" stroke-width="1.1"/><path d="M4,3.5 H21" stroke="#3d78b8" stroke-width="1.1"/><path d="M2.5,3.5 L5.5,1 V6 Z M22.5,3.5 L19.5,1 V6 Z" fill="#3d78b8"/><path d="M1.5,27.5 V31.5 H9 L11,29.5 L12,31.5 H19 L22,27.5" fill="#fff" stroke="#6a6a6a"/><rect x="1.5" y="7.5" width="27" height="20" fill="#fff" stroke="#6a6a6a"/><path d="M8.5,7.5 V27.5" stroke="#8a8a8a"/><path d="M16.5,7.5 V27.5" stroke="#8a8a8a"/><path d="M23.5,7.5 V27.5" stroke="#8a8a8a"/><path d="M1.5,12.5 H28.5" stroke="#8a8a8a"/><path d="M1.5,22.5 H28.5" stroke="#8a8a8a"/><rect x="9" y="13" width="7" height="9" fill="#3d78b8"/></svg>
<div class="t" style="left:1551px;top:101.84px;font-size:12px;line-height:12px;color:#444444;font-weight:normal;font-family:'Liberation Sans', sans-serif;font-style:normal;">Format</div>
<svg class="s" style="left:1567px;top:122px;" width="5" height="3" viewBox="0 0 5 3"><polygon points="0,0 5,0 2.5,3" fill="#5f5f5f"/></svg>
<div class="t" style="left:1515px;top:136.84px;font-size:12px;line-height:12px;color:#666666;font-weight:normal;font-family:'Liberation Sans', sans-serif;font-style:normal;">Cells</div>
<div class="r" style="left:1595px;top:63px;width:1px;height:84px;background:#d9d9d9;"></div>
<svg class="s" style="left:1603px;top:65px;" width="16" height="16" viewBox="0 0 16 16"><path d="M15,3 V1.3 H1.5 L8,8 L1.5,14.7 H15 V13" fill="none" stroke="#3f3f3f" stroke-width="2.2"/></svg>
<div class="t" style="left:1622px;top:67.84px;font-size:12px;line-height:12px;color:#444444;font-weight:normal;font-family:'Liberation Sans', sans-serif;font-style:normal;">AutoSum</div>
<svg class="s" style="left:1682px;top:72px;" width="5" height="3" viewBox="0 0 5 3"><polygon points="0,0 5,0 2.5,3" fill="#5f5f5f"/></svg>
<svg class="s" style="left:1604px;top:88px;" width="15" height="17" viewBox="0 0 15 17"><rect x="0.5" y="0.5" width="13" height="15" fill="#fff" stroke="#777" stroke-width="1"/><rect x="0" y="0" width="14" height="3.2" fill="#777"/><path d="M7,4.5 V10" stroke="#3d78b8" stroke-width="2"/><path d="M2.8,8.3 L11.2,8.3 L7,13.8 Z" fill="#3d78b8"/></svg>
<div class="t" style="left:1623px;top:90.84px;font-size:12px;line-height:12px;color:#444444;font-weight:normal;font-family:'Liberation Sans', sans-serif;font-style:normal;">Fill</div>
<svg class="s" style="left:1640px;top:97px;" width="5" height="3" viewBox="0 0 5 3"><polygon points="0,0 5,0 2.5,3" fill="#5f5f5f"/></svg>
<svg class="s" style="left:1603px;top:111px;" width="16" height="15" viewBox="0 0 16 15"><path d="M4.5,8 L11,1.5 L15,5.5 L8.5,12 Z" fill="#e8899c"/><path d="M1.2,11.3 L3.5,9 L7.5,13 L5.2,15.3 Z" fill="#e8899c"/><path d="M6,14.5 H15" stroke="#5a5a5a" stroke-width="1"/></svg>
<div class="t" style="left:1623px;top:113.84px;font-size:12px;line-height:12px;color:#444444;font-weight:normal;font-family:'Liberation Sans', sans-serif;font-style:normal;">Clear</div>
<svg class="s" style="left:1652px;top:120px;" width="5" height="3" viewBox="0 0 5 3"><polygon points="0,0 5,0 2.5,3" fill="#5f5f5f"/></svg>
<svg class="s" style="left:1697px;top:67px;" width="32" height="28" viewBox="0 0 32 28"><text x="0" y="12.5" font-family="Liberation Sans" font-weight="bold" font-size="15" fill="#3d7fc4">A</text><text x="1" y="27" font-family="Liberation Sans" font-weight="bold" font-size="14.5" fill="#9e57c6">Z</text><path d="M13,8 H30 L23.5,15 V22.5 H20 V15 Z" fill="#7a7a7a"/><path d="M21,16 V21.5 H22.5 V16" fill="#fff"/></svg>
<div class="t" style="left:1696px;top:101.84px;font-size:12px;line-height:12px;color:#444444;font-weight:normal;font-family:'Liberation Sans', sans-serif;font-style:normal;">Sort &amp;</div>
<div class="t" style="left:1697px;top:117.84px;font-size:12px;line-height:12px;color:#444444;font-weight:normal;font-family:'Liberation Sans', sans-serif;font-style:normal;">Filter</div>
<svg class="s" style="left:1726px;top:123px;" width="5" height="3" viewBox="0 0 5 3"><polygon points="0,0 5,0 2.5,3" fill="#5f5f5f"/></svg>
<svg class="s" style="left:1741px;top:66px;" width="29" height="29" viewBox="0 0 29 29"><circle cx="17.5" cy="10.5" r="8.5" fill="#fff" stroke="#3d7fc4" stroke-width="2"/><path d="M11.5,16.5 L2.5,25.5" stroke="#3d7fc4" stroke-width="3.2" stroke-linecap="round"/></svg>
<div class="t" style="left:1738px;top:101.84px;font-size:12px;line-height:12px;color:#444444;font-weight:normal;font-family:'Liberation Sans', sans-serif;font-style:normal;">Find &amp;</div>
<div class="t" style="left:1736px;top:117.84px;font-size:12px;line-height:12px;color:#444444;font-weight:normal;font-family:'Liberation Sans', sans-serif;font-style:normal;">Select</div>
<svg class="s" style="left:1770px;top:123px;" width="5" height="3" viewBox="0 0 5 3"><polygon points="0,0 5,0 2.5,3" fill="#5f5f5f"/></svg>
<div class="t" style="left:1670px;top:136.84px;font-size:12px;line-height:12px;color:#666666;font-weight:normal;font-family:'Liberation Sans', sans-serif;font-style:normal;">Editing</div>
<div class="r" style="left:1781px;top:63px;width:1px;height:84px;background:#d9d9d9;"></div>
<svg class="s" style="left:1902px;top:139px;" width="10" height="7" viewBox="0 0 10 7"><path d="M1,6 L5,2 L9,6" fill="none" stroke="#666" stroke-width="1.6"/></svg>
<div class="r" style="left:7px;top:162px;width:102px;height:26px;background:#fff;box-sizing:border-box;border:1px solid #c6c6c6;"></div>
<div class="t" style="left:14px;top:169.84px;font-size:12px;line-height:12px;color:#222;font-weight:normal;font-family:'Liberation Sans', sans-serif;font-style:normal;">A1</div>
<div class="r" style="left:139px;top:162px;width:110px;height:26px;background:#fff;box-sizing:border-box;border:1px solid #c6c6c6;"></div>
<div class="r" style="left:252px;top:162px;width:1665px;height:26px;background:#fff;box-sizing:border-box;border:1px solid #c6c6c6;"></div>
<div class="t" style="left:264px;top:169.42px;font-size:12.5px;line-height:12.5px;color:#222;font-weight:normal;font-family:'Liberation Sans', sans-serif;font-style:normal;">DANHSACHHOSO_3122025</div>
<svg class="s" style="left:95px;top:173px;" width="7" height="4" viewBox="0 0 7 4"><polygon points="0,0 7,0 3.5,3.5" fill="#6a6a6a"/></svg>
<div class="r" style="left:123px;top:170px;width:2px;height:2px;background:#a0a0a0;"></div>
<div class="r" style="left:123px;top:175px;width:2px;height:2px;background:#a0a0a0;"></div>
<div class="r" style="left:123px;top:180px;width:2px;height:2px;background:#a0a0a0;"></div>
<svg class="s" style="left:152px;top:170px;" width="12" height="11" viewBox="0 0 12 11"><path d="M1,0.5 L11,10.5 M11,0.5 L1,10.5" stroke="#bdbdbd" stroke-width="1.5"/></svg>
<svg class="s" style="left:188px;top:170px;" width="14" height="11" viewBox="0 0 14 11"><path d="M1,6 L5,10 L13,1" fill="none" stroke="#cbcbcb" stroke-width="2.2"/></svg>
<div class="t" style="left:224px;top:168px;font-size:15px;line-height:14px;font-family:'Liberation Serif',serif;font-style:italic;color:#555;">f<span style="font-size:11px;">x</span></div>
<svg class="s" style="left:1904px;top:172px;" width="9" height="6" viewBox="0 0 9 6"><path d="M1,1 L4.5,4.5 L8,1" fill="none" stroke="#666" stroke-width="1.6"/></svg>
<div class="r" style="left:2px;top:198px;width:1898px;height:794px;background:#ffffff;"></div>
<div class="r" style="left:2px;top:198px;width:25px;height:794px;background:#e6e6e6;"></div>
<div class="r" style="left:2px;top:198px;width:25px;height:15px;background:#e6e6e6;"></div>
<div class="r" style="left:27px;top:198px;width:1873px;height:15px;background:#d2d2d2;"></div>
<div class="r" style="left:28px;top:233px;width:1872px;height:40px;background:#ffc0cb;"></div>
<div class="t" style="left:27px;top:199px;width:165px;text-align:center;font-size:13px;line-height:13px;color:#217346;">A</div>
<div class="r" style="left:192px;top:198px;width:1px;height:15px;background:#b9b9b9;"></div>
<div class="t" style="left:192px;top:199px;width:105px;text-align:center;font-size:13px;line-height:13px;color:#217346;">B</div>
<div class="r" style="left:297px;top:198px;width:1px;height:15px;background:#b9b9b9;"></div>
<div class="t" style="left:297px;top:199px;width:67px;text-align:center;font-size:13px;line-height:13px;color:#217346;">C</div>
<div class="r" style="left:364px;top:198px;width:1px;height:15px;background:#b9b9b9;"></div>
<div class="t" style="left:364px;top:199px;width:76px;text-align:center;font-size:13px;line-height:13px;color:#217346;">D</div>
<div class="r" style="left:440px;top:198px;width:1px;height:15px;background:#b9b9b9;"></div>
<div class="t" style="left:440px;top:199px;width:121px;text-align:center;font-size:13px;line-height:13px;color:#217346;">E</div>
<div class="r" style="left:561px;top:198px;width:1px;height:15px;background:#b9b9b9;"></div>
<div class="t" style="left:561px;top:199px;width:154px;text-align:center;font-size:13px;line-height:13px;color:#217346;">F</div>
<div class="r" style="left:715px;top:198px;width:1px;height:15px;background:#b9b9b9;"></div>
<div class="t" style="left:715px;top:199px;width:164px;text-align:center;font-size:13px;line-height:13px;color:#217346;">G</div>
<div class="r" style="left:879px;top:198px;width:1px;height:15px;background:#b9b9b9;"></div>
<div class="t" style="left:879px;top:199px;width:361px;text-align:center;font-size:13px;line-height:13px;color:#217346;">H</div>
<div class="r" style="left:1240px;top:198px;width:1px;height:15px;background:#b9b9b9;"></div>
<div class="t" style="left:1240px;top:199px;width:113px;text-align:center;font-size:13px;line-height:13px;color:#217346;">I</div>
<div class="r" style="left:1353px;top:198px;width:1px;height:15px;background:#b9b9b9;"></div>
<div class="t" style="left:1353px;top:199px;width:208px;text-align:center;font-size:13px;line-height:13px;color:#217346;">J</div>
<div class="r" style="left:1561px;top:198px;width:1px;height:15px;background:#b9b9b9;"></div>
<div class="t" style="left:1561px;top:199px;width:171px;text-align:center;font-size:13px;line-height:13px;color:#217346;">K</div>
<div class="r" style="left:1732px;top:198px;width:1px;height:15px;background:#b9b9b9;"></div>
<div class="t" style="left:1732px;top:199px;width:184px;text-align:center;font-size:13px;line-height:13px;color:#217346;">L</div>
<div class="r" style="left:1900px;top:198px;width:1px;height:15px;background:#b9b9b9;"></div>
<div class="r" style="left:27px;top:198px;width:1px;height:794px;background:#ababab;"></div>
<svg class="s" style="left:15px;top:202px;" width="10" height="10" viewBox="0 0 10 10"><polygon points="9,0 9,9 0,9" fill="#b4b4b4"/></svg>
<div class="r" style="left:2px;top:213px;width:25px;height:18px;background:#d2d2d2;"></div>
<div class="r" style="left:2px;top:213px;width:25px;height:1px;background:#ababab;"></div>
<div class="r" style="left:2px;top:231px;width:25px;height:1px;background:#ababab;"></div>
<div class="t" style="left:2px;top:216px;width:25px;text-align:center;font-size:13px;line-height:13px;color:#217346;">1</div>
<div class="r" style="left:2px;top:272px;width:25px;height:1px;background:#c6c6c6;"></div>
<div class="t" style="left:2px;top:258px;width:25px;text-align:center;font-size:13px;line-height:13px;color:#222;">2</div>
<div class="t" style="left:1022px;top:216px;font-size:16px;line-height:16px;font-weight:bold;font-family:'Liberation Serif', serif;color:#000;">DANHSACHHOSO 3122025</div>
<div class="t" style="left:27px;top:245px;width:165px;text-align:center;font-size:15.4px;line-height:16px;font-weight:bold;font-family:'Liberation Serif', serif;color:#000;">Họ và tên</div>
<div class="t" style="left:192px;top:245px;width:105px;text-align:center;font-size:15.4px;line-height:16px;font-weight:bold;font-family:'Liberation Serif', serif;color:#000;">Số hiệu cán bộ</div>
<div class="t" style="left:297px;top:245px;width:67px;text-align:center;font-size:15.4px;line-height:16px;font-weight:bold;font-family:'Liberation Serif', serif;color:#000;">Giới tính</div>
<div class="t" style="left:364px;top:245px;width:76px;text-align:center;font-size:15.4px;line-height:16px;font-weight:bold;font-family:'Liberation Serif', serif;color:#000;">Ngày sinh</div>
<div class="t" style="left:440px;top:245px;width:121px;text-align:center;font-size:15.4px;line-height:16px;font-weight:bold;font-family:'Liberation Serif', serif;color:#000;">Loại cán bộ</div>
<div class="t" style="left:561px;top:245px;width:154px;text-align:center;font-size:15.4px;line-height:16px;font-weight:bold;font-family:'Liberation Serif', serif;color:#000;">Chức vụ</div>
<div class="t" style="left:715px;top:245px;width:164px;text-align:center;font-size:15.4px;line-height:16px;font-weight:bold;font-family:'Liberation Serif', serif;color:#000;">Chức danh</div>
<div class="t" style="left:879px;top:245px;width:361px;text-align:center;font-size:15.4px;line-height:16px;font-weight:bold;font-family:'Liberation Serif', serif;color:#000;">Phòng ban</div>
<div class="t" style="left:1240px;top:245px;width:113px;text-align:center;font-size:15.4px;line-height:16px;font-weight:bold;font-family:'Liberation Serif', serif;color:#000;">Đơn vị công tác</div>
<div class="t" style="left:1353px;top:245px;width:208px;text-align:center;font-size:15.4px;line-height:16px;font-weight:bold;font-family:'Liberation Serif', serif;color:#000;">Trình độ chuyên môn cao nhất</div>
<div class="t" style="left:1561px;top:245px;width:171px;text-align:center;font-size:15.4px;line-height:16px;font-weight:bold;font-family:'Liberation Serif', serif;color:#000;">Trình độ lý luận chính trị</div>
<div class="t" style="left:1737px;top:245px;width:163px;overflow:hidden;font-size:15.4px;line-height:16px;font-weight:bold;font-family:'Liberation Serif', serif;color:#000;">Trình độ quản lý nhà nước</div>
<div class="r" style="left:2px;top:290px;width:25px;height:1px;background:#c6c6c6;"></div>
<div class="t" style="left:2px;top:276px;width:25px;text-align:center;font-size:13px;line-height:13px;color:#222;">3</div>
<div class="t" style="left:30px;top:274px;width:162px;height:17px;overflow:hidden;font-size:13px;line-height:17px;color:#000;">Lê Gia Huy Lộc</div>
<div class="t" style="left:195px;top:274px;width:102px;height:17px;overflow:hidden;font-size:13px;line-height:17px;color:#000;">KT.2008.163</div>
<div class="t" style="left:300px;top:274px;width:64px;height:17px;overflow:hidden;font-size:13px;line-height:17px;color:#000;">Nam</div>
<div class="t" style="left:367px;top:274px;width:73px;height:17px;overflow:hidden;font-size:13px;line-height:17px;color:#000;">07/08/1967</div>
<div class="t" style="left:443px;top:274px;width:118px;height:17px;overflow:hidden;font-size:13px;line-height:17px;color:#000;">Công chức</div>
<div class="t" style="left:564px;top:274px;width:151px;height:17px;overflow:hidden;font-size:13px;line-height:17px;color:#000;">Trưởng phòng</div>
<div class="t" style="left:882px;top:274px;width:358px;height:17px;overflow:hidden;font-size:13px;line-height:17px;color:#000;">Phòng kiểm toán ngân sách 3</div>
<div class="t" style="left:1356px;top:274px;width:205px;height:17px;overflow:hidden;font-size:13px;line-height:17px;color:#000;">Thạc sĩ</div>
<div class="t" style="left:1564px;top:274px;width:168px;height:17px;overflow:hidden;font-size:13px;line-height:17px;color:#000;">Cao cấp</div>
<div class="t" style="left:1735px;top:274px;width:165px;height:17px;overflow:hidden;font-size:13px;line-height:17px;color:#000;">Chuyên viên chính</div>
<div class="r" style="left:2px;top:307px;width:25px;height:1px;background:#c6c6c6;"></div>
<div class="t" style="left:2px;top:293px;width:25px;text-align:center;font-size:13px;line-height:13px;color:#222;">4</div>
<div class="t" style="left:30px;top:291px;width:162px;height:17px;overflow:hidden;font-size:13px;line-height:17px;color:#000;">Huỳnh Bảo Quốc Duy</div>
<div class="t" style="left:195px;top:291px;width:102px;height:17px;overflow:hidden;font-size:13px;line-height:17px;color:#000;">KT.2005.006</div>
<div class="t" style="left:300px;top:291px;width:64px;height:17px;overflow:hidden;font-size:13px;line-height:17px;color:#000;">Nam</div>
<div class="t" style="left:367px;top:291px;width:73px;height:17px;overflow:hidden;font-size:13px;line-height:17px;color:#000;">24/05/1989</div>
<div class="t" style="left:443px;top:291px;width:118px;height:17px;overflow:hidden;font-size:13px;line-height:17px;color:#000;">Công chức</div>
<div class="t" style="left:564px;top:291px;width:151px;height:17px;overflow:hidden;font-size:13px;line-height:17px;color:#000;">Phó trưởng phòng</div>
<div class="t" style="left:882px;top:291px;width:358px;height:17px;overflow:hidden;font-size:13px;line-height:17px;color:#000;">Phòng Kiểm toán Ngân hàng 2</div>
<div class="t" style="left:1356px;top:291px;width:205px;height:17px;overflow:hidden;font-size:13px;line-height:17px;color:#000;">Thạc sĩ</div>
<div class="t" style="left:1564px;top:291px;width:168px;height:17px;overflow:hidden;font-size:13px;line-height:17px;color:#000;">Cao cấp</div>
<div class="t" style="left:1735px;top:291px;width:165px;height:17px;overflow:hidden;font-size:13px;line-height:17px;color:#000;">Chuyên viên chính</div>
<div class="r" style="left:2px;top:324px;width:25px;height:1px;background:#c6c6c6;"></div>
<div class="t" style="left:2px;top:310px;width:25px;text-align:center;font-size:13px;line-height:13px;color:#222;">5</div>
<div class="t" style="left:30px;top:308px;width:162px;height:17px;overflow:hidden;font-size:13px;line-height:17px;color:#000;">Tô Tuấn Thắng</div>
<div class="t" style="left:195px;top:308px;width:102px;height:17px;overflow:hidden;font-size:13px;line-height:17px;color:#000;">KT.2013.089</div>
<div class="t" style="left:300px;top:308px;width:64px;height:17px;overflow:hidden;font-size:13px;line-height:17px;color:#000;">Nam</div>
<div class="t" style="left:367px;top:308px;width:73px;height:17px;overflow:hidden;font-size:13px;line-height:17px;color:#000;">29/08/1992</div>
<div class="t" style="left:443px;top:308px;width:118px;height:17px;overflow:hidden;font-size:13px;line-height:17px;color:#000;">Công chức</div>
<div class="t" style="left:718px;top:308px;width:161px;height:17px;overflow:hidden;font-size:13px;line-height:17px;color:#000;">Kiểm toán viên</div>
<div class="t" style="left:882px;top:308px;width:358px;height:17px;overflow:hidden;font-size:13px;line-height:17px;color:#000;">Phòng Kiểm toán doanh nghiệp 1</div>
<div class="t" style="left:1356px;top:308px;width:205px;height:17px;overflow:hidden;font-size:13px;line-height:17px;color:#000;">Cử nhân</div>
<div class="t" style="left:1564px;top:308px;width:168px;height:17px;overflow:hidden;font-size:13px;line-height:17px;color:#000;">Trung cấp</div>
<div class="t" style="left:1735px;top:308px;width:165px;height:17px;overflow:hidden;font-size:13px;line-height:17px;color:#000;">Chuyên viên chính</div>
<div class="r" style="left:2px;top:341px;width:25px;height:1px;background:#c6c6c6;"></div>
<div class="t" style="left:2px;top:327px;width:25px;text-align:center;font-size:13px;line-height:13px;color:#222;">6</div>
<div class="t" style="left:30px;top:325px;width:162px;height:17px;overflow:hidden;font-size:13px;line-height:17px;color:#000;">Doãn Bá Khải</div>
<div class="t" style="left:195px;top:325px;width:102px;height:17px;overflow:hidden;font-size:13px;line-height:17px;color:#000;">KT.2010.260</div>
<div class="t" style="left:300px;top:325px;width:64px;height:17px;overflow:hidden;font-size:13px;line-height:17px;color:#000;">Nam</div>
<div class="t" style="left:367px;top:325px;width:73px;height:17px;overflow:hidden;font-size:13px;line-height:17px;color:#000;">12/10/1970</div>
<div class="t" style="left:443px;top:325px;width:118px;height:17px;overflow:hidden;font-size:13px;line-height:17px;color:#000;">Công chức</div>
<div class="t" style="left:564px;top:325px;width:151px;height:17px;overflow:hidden;font-size:13px;line-height:17px;color:#000;">Phó trưởng phòng</div>
<div class="t" style="left:882px;top:325px;width:358px;height:17px;overflow:hidden;font-size:13px;line-height:17px;color:#000;">Phòng Tổng hợp</div>
<div class="t" style="left:1356px;top:325px;width:205px;height:17px;overflow:hidden;font-size:13px;line-height:17px;color:#000;">Cử nhân</div>
<div class="t" style="left:1564px;top:325px;width:168px;height:17px;overflow:hidden;font-size:13px;line-height:17px;color:#000;">Cao cấp</div>
<div class="t" style="left:1735px;top:325px;width:165px;height:17px;overflow:hidden;font-size:13px;line-height:17px;color:#000;">Chuyên viên chính</div>
<div class="r" style="left:2px;top:358px;width:25px;height:1px;background:#c6c6c6;"></div>
<div class="t" style="left:2px;top:344px;width:25px;text-align:center;font-size:13px;line-height:13px;color:#222;">7</div>
<div class="t" style="left:30px;top:342px;width:162px;height:17px;overflow:hidden;font-size:13px;line-height:17px;color:#000;">Tôn Bảo Hùng</div>
<div class="t" style="left:195px;top:342px;width:102px;height:17px;overflow:hidden;font-size:13px;line-height:17px;color:#000;">KT.2015.052</div>
<div class="t" style="left:300px;top:342px;width:64px;height:17px;overflow:hidden;font-size:13px;line-height:17px;color:#000;">Nam</div>
<div class="t" style="left:367px;top:342px;width:73px;height:17px;overflow:hidden;font-size:13px;line-height:17px;color:#000;">21/08/1967</div>
<div class="t" style="left:443px;top:342px;width:118px;height:17px;overflow:hidden;font-size:13px;line-height:17px;color:#000;">Công chức</div>
<div class="t" style="left:718px;top:342px;width:161px;height:17px;overflow:hidden;font-size:13px;line-height:17px;color:#000;">Kiểm toán viên</div>
<div class="t" style="left:882px;top:342px;width:358px;height:17px;overflow:hidden;font-size:13px;line-height:17px;color:#000;">Phòng kiểm toán ngân sách 1</div>
<div class="t" style="left:1735px;top:342px;width:165px;height:17px;overflow:hidden;font-size:13px;line-height:17px;color:#000;">Chuyên viên chính</div>
<div class="r" style="left:2px;top:375px;width:25px;height:1px;background:#c6c6c6;"></div>
<div class="t" style="left:2px;top:361px;width:25px;text-align:center;font-size:13px;line-height:13px;color:#222;">8</div>
<div class="t" style="left:30px;top:359px;width:162px;height:17px;overflow:hidden;font-size:13px;line-height:17px;color:#000;">Vương Minh Đức Khoa</div>
<div class="t" style="left:195px;top:359px;width:102px;height:17px;overflow:hidden;font-size:13px;line-height:17px;color:#000;">KT.2008.029</div>
<div class="t" style="left:300px;top:359px;width:64px;height:17px;overflow:hidden;font-size:13px;line-height:17px;color:#000;">Nam</div>
<div class="t" style="left:367px;top:359px;width:73px;height:17px;overflow:hidden;font-size:13px;line-height:17px;color:#000;">30/10/1985</div>
<div class="t" style="left:443px;top:359px;width:118px;height:17px;overflow:hidden;font-size:13px;line-height:17px;color:#000;">Công chức</div>
<div class="t" style="left:718px;top:359px;width:161px;height:17px;overflow:hidden;font-size:13px;line-height:17px;color:#000;">Kiểm toán viên</div>
<div class="t" style="left:882px;top:359px;width:358px;height:17px;overflow:hidden;font-size:13px;line-height:17px;color:#000;">Phòng Tổng hợp</div>
<div class="t" style="left:1356px;top:359px;width:205px;height:17px;overflow:hidden;font-size:13px;line-height:17px;color:#000;">Thạc sĩ</div>
<div class="t" style="left:1564px;top:359px;width:168px;height:17px;overflow:hidden;font-size:13px;line-height:17px;color:#000;">Trung cấp</div>
<div class="t" style="left:1735px;top:359px;width:165px;height:17px;overflow:hidden;font-size:13px;line-height:17px;color:#000;">Chuyên viên chính</div>
<div class="r" style="left:2px;top:392px;width:25px;height:1px;background:#c6c6c6;"></div>
<div class="t" style="left:2px;top:378px;width:25px;text-align:center;font-size:13px;line-height:13px;color:#222;">9</div>
<div class="t" style="left:30px;top:376px;width:162px;height:17px;overflow:hidden;font-size:13px;line-height:17px;color:#000;">Tạ Ái Thùy</div>
<div class="t" style="left:195px;top:376px;width:102px;height:17px;overflow:hidden;font-size:13px;line-height:17px;color:#000;">KT.2008.130</div>
<div class="t" style="left:300px;top:376px;width:64px;height:17px;overflow:hidden;font-size:13px;line-height:17px;color:#000;">Nữ</div>
<div class="t" style="left:367px;top:376px;width:73px;height:17px;overflow:hidden;font-size:13px;line-height:17px;color:#000;">18/07/1995</div>
<div class="t" style="left:443px;top:376px;width:118px;height:17px;overflow:hidden;font-size:13px;line-height:17px;color:#000;">Công chức</div>
<div class="t" style="left:718px;top:376px;width:161px;height:17px;overflow:hidden;font-size:13px;line-height:17px;color:#000;">Kiểm toán viên</div>
<div class="t" style="left:882px;top:376px;width:358px;height:17px;overflow:hidden;font-size:13px;line-height:17px;color:#000;">Phòng Kiểm toán đầu tư dự án 3</div>
<div class="t" style="left:1356px;top:376px;width:205px;height:17px;overflow:hidden;font-size:13px;line-height:17px;color:#000;">Thạc sĩ</div>
<div class="t" style="left:1564px;top:376px;width:168px;height:17px;overflow:hidden;font-size:13px;line-height:17px;color:#000;">Trung cấp</div>
<div class="t" style="left:1735px;top:376px;width:165px;height:17px;overflow:hidden;font-size:13px;line-height:17px;color:#000;">Chuyên viên chính</div>
<div class="r" style="left:2px;top:409px;width:25px;height:1px;background:#c6c6c6;"></div>
<div class="t" style="left:2px;top:395px;width:25px;text-align:center;font-size:13px;line-height:13px;color:#222;">10</div>
<div class="t" style="left:30px;top:393px;width:162px;height:17px;overflow:hidden;font-size:13px;line-height:17px;color:#000;">Lại Minh Nhật Việt</div>
<div class="t" style="left:195px;top:393px;width:102px;height:17px;overflow:hidden;font-size:13px;line-height:17px;color:#000;">KT.2014.205</div>
<div class="t" style="left:300px;top:393px;width:64px;height:17px;overflow:hidden;font-size:13px;line-height:17px;color:#000;">Nam</div>
<div class="t" style="left:367px;top:393px;width:73px;height:17px;overflow:hidden;font-size:13px;line-height:17px;color:#000;">04/12/1988</div>
<div class="t" style="left:443px;top:393px;width:118px;height:17px;overflow:hidden;font-size:13px;line-height:17px;color:#000;">Công chức</div>
<div class="t" style="left:564px;top:393px;width:151px;height:17px;overflow:hidden;font-size:13px;line-height:17px;color:#000;">Phó trưởng phòng</div>
<div class="t" style="left:882px;top:393px;width:358px;height:17px;overflow:hidden;font-size:13px;line-height:17px;color:#000;">Phòng kiểm toán doanh nghiệp</div>
<div class="t" style="left:1356px;top:393px;width:205px;height:17px;overflow:hidden;font-size:13px;line-height:17px;color:#000;">Tiến sĩ</div>
<div class="t" style="left:1564px;top:393px;width:168px;height:17px;overflow:hidden;font-size:13px;line-height:17px;color:#000;">Trung cấp</div>
<div class="t" style="left:1735px;top:393px;width:165px;height:17px;overflow:hidden;font-size:13px;line-height:17px;color:#000;">Chuyên viên chính</div>
<div class="r" style="left:2px;top:426px;width:25px;height:1px;background:#c6c6c6;"></div>
<div class="t" style="left:2px;top:412px;width:25px;text-align:center;font-size:13px;line-height:13px;color:#222;">11</div>
<div class="t" style="left:30px;top:410px;width:162px;height:17px;overflow:hidden;font-size:13px;line-height:17px;color:#000;">Triệu Diệp Chi Phương</div>
<div class="t" style="left:195px;top:410px;width:102px;height:17px;overflow:hidden;font-size:13px;line-height:17px;color:#000;">KT.2010.185</div>
<div class="t" style="left:300px;top:410px;width:64px;height:17px;overflow:hidden;font-size:13px;line-height:17px;color:#000;">Nữ</div>
<div class="t" style="left:367px;top:410px;width:73px;height:17px;overflow:hidden;font-size:13px;line-height:17px;color:#000;">27/06/1998</div>
<div class="t" style="left:443px;top:410px;width:118px;height:17px;overflow:hidden;font-size:13px;line-height:17px;color:#000;">Công chức</div>
<div class="t" style="left:718px;top:410px;width:161px;height:17px;overflow:hidden;font-size:13px;line-height:17px;color:#000;">Kiểm toán viên</div>
<div class="t" style="left:882px;top:410px;width:358px;height:17px;overflow:hidden;font-size:13px;line-height:17px;color:#000;">Phòng kiểm toán ngân sách 3</div>
<div class="t" style="left:1356px;top:410px;width:205px;height:17px;overflow:hidden;font-size:13px;line-height:17px;color:#000;">Cử nhân</div>
<div class="t" style="left:1735px;top:410px;width:165px;height:17px;overflow:hidden;font-size:13px;line-height:17px;color:#000;">Chuyên viên chính</div>
<div class="r" style="left:2px;top:443px;width:25px;height:1px;background:#c6c6c6;"></div>
<div class="t" style="left:2px;top:429px;width:25px;text-align:center;font-size:13px;line-height:13px;color:#222;">12</div>
<div class="t" style="left:30px;top:427px;width:162px;height:17px;overflow:hidden;font-size:13px;line-height:17px;color:#000;">Vương Thanh Tùng Quân</div>
<div class="t" style="left:195px;top:427px;width:102px;height:17px;overflow:hidden;font-size:13px;line-height:17px;color:#000;">KT.2013.070</div>
<div class="t" style="left:300px;top:427px;width:64px;height:17px;overflow:hidden;font-size:13px;line-height:17px;color:#000;">Nam</div>
<div class="t" style="left:367px;top:427px;width:73px;height:17px;overflow:hidden;font-size:13px;line-height:17px;color:#000;">02/03/1978</div>
<div class="t" style="left:443px;top:427px;width:118px;height:17px;overflow:hidden;font-size:13px;line-height:17px;color:#000;">Công chức</div>
<div class="t" style="left:718px;top:427px;width:161px;height:17px;overflow:hidden;font-size:13px;line-height:17px;color:#000;">Kiểm toán viên</div>
<div class="t" style="left:882px;top:427px;width:358px;height:17px;overflow:hidden;font-size:13px;line-height:17px;color:#000;">Phòng Kiểm toán đầu tư dự án</div>
<div class="t" style="left:1564px;top:427px;width:168px;height:17px;overflow:hidden;font-size:13px;line-height:17px;color:#000;">Trung cấp</div>
<div class="t" style="left:1735px;top:427px;width:165px;height:17px;overflow:hidden;font-size:13px;line-height:17px;color:#000;">Chuyên viên</div>
<div class="r" style="left:2px;top:460px;width:25px;height:1px;background:#c6c6c6;"></div>
<div class="t" style="left:2px;top:446px;width:25px;text-align:center;font-size:13px;line-height:13px;color:#222;">13</div>
<div class="t" style="left:30px;top:444px;width:162px;height:17px;overflow:hidden;font-size:13px;line-height:17px;color:#000;">Triệu Ái Linh Nhung</div>
<div class="t" style="left:195px;top:444px;width:102px;height:17px;overflow:hidden;font-size:13px;line-height:17px;color:#000;">KT.2025.011</div>
<div class="t" style="left:300px;top:444px;width:64px;height:17px;overflow:hidden;font-size:13px;line-height:17px;color:#000;">Nữ</div>
<div class="t" style="left:367px;top:444px;width:73px;height:17px;overflow:hidden;font-size:13px;line-height:17px;color:#000;">23/12/1967</div>
<div class="t" style="left:443px;top:444px;width:118px;height:17px;overflow:hidden;font-size:13px;line-height:17px;color:#000;">Công chức</div>
<div class="t" style="left:718px;top:444px;width:161px;height:17px;overflow:hidden;font-size:13px;line-height:17px;color:#000;">Chuyên viên</div>
<div class="t" style="left:882px;top:444px;width:358px;height:17px;overflow:hidden;font-size:13px;line-height:17px;color:#000;">Phòng Phòng, chống tham nhũng</div>
<div class="t" style="left:1356px;top:444px;width:205px;height:17px;overflow:hidden;font-size:13px;line-height:17px;color:#000;">Cử nhân</div>
<div class="r" style="left:2px;top:477px;width:25px;height:1px;background:#c6c6c6;"></div>
<div class="t" style="left:2px;top:463px;width:25px;text-align:center;font-size:13px;line-height:13px;color:#222;">14</div>
<div class="t" style="left:30px;top:461px;width:162px;height:17px;overflow:hidden;font-size:13px;line-height:17px;color:#000;">Thân Nhật Khánh</div>
<div class="t" style="left:195px;top:461px;width:102px;height:17px;overflow:hidden;font-size:13px;line-height:17px;color:#000;">KT.2012.007</div>
<div class="t" style="left:300px;top:461px;width:64px;height:17px;overflow:hidden;font-size:13px;line-height:17px;color:#000;">Nam</div>
<div class="t" style="left:367px;top:461px;width:73px;height:17px;overflow:hidden;font-size:13px;line-height:17px;color:#000;">23/11/1973</div>
<div class="t" style="left:443px;top:461px;width:118px;height:17px;overflow:hidden;font-size:13px;line-height:17px;color:#000;">Công chức</div>
<div class="t" style="left:564px;top:461px;width:151px;height:17px;overflow:hidden;font-size:13px;line-height:17px;color:#000;">Trưởng phòng</div>
<div class="t" style="left:882px;top:461px;width:358px;height:17px;overflow:hidden;font-size:13px;line-height:17px;color:#000;">Phòng kiểm toán ngân sách 1</div>
<div class="t" style="left:1356px;top:461px;width:205px;height:17px;overflow:hidden;font-size:13px;line-height:17px;color:#000;">Thạc sĩ</div>
<div class="t" style="left:1564px;top:461px;width:168px;height:17px;overflow:hidden;font-size:13px;line-height:17px;color:#000;">Cao cấp</div>
<div class="t" style="left:1735px;top:461px;width:165px;height:17px;overflow:hidden;font-size:13px;line-height:17px;color:#000;">Chuyên viên chính</div>
<div class="r" style="left:2px;top:494px;width:25px;height:1px;background:#c6c6c6;"></div>
<div class="t" style="left:2px;top:480px;width:25px;text-align:center;font-size:13px;line-height:13px;color:#222;">15</div>
<div class="t" style="left:30px;top:478px;width:162px;height:17px;overflow:hidden;font-size:13px;line-height:17px;color:#000;">Nguyễn Quốc Bảo Phú</div>
<div class="t" style="left:195px;top:478px;width:102px;height:17px;overflow:hidden;font-size:13px;line-height:17px;color:#000;">KT.2016.005</div>
<div class="t" style="left:300px;top:478px;width:64px;height:17px;overflow:hidden;font-size:13px;line-height:17px;color:#000;">Nam</div>
<div class="t" style="left:367px;top:478px;width:73px;height:17px;overflow:hidden;font-size:13px;line-height:17px;color:#000;">13/03/1981</div>
<div class="t" style="left:443px;top:478px;width:118px;height:17px;overflow:hidden;font-size:13px;line-height:17px;color:#000;">Công chức</div>
<div class="t" style="left:564px;top:478px;width:151px;height:17px;overflow:hidden;font-size:13px;line-height:17px;color:#000;">Phó chánh văn phòng</div>
<div class="t" style="left:882px;top:478px;width:358px;height:17px;overflow:hidden;font-size:13px;line-height:17px;color:#000;">Văn phòng</div>
<div class="t" style="left:1356px;top:478px;width:205px;height:17px;overflow:hidden;font-size:13px;line-height:17px;color:#000;">Thạc sĩ</div>
<div class="t" style="left:1564px;top:478px;width:168px;height:17px;overflow:hidden;font-size:13px;line-height:17px;color:#000;">Cao cấp</div>
<div class="t" style="left:1735px;top:478px;width:165px;height:17px;overflow:hidden;font-size:13px;line-height:17px;color:#000;">Chuyên viên chính</div>
<div class="r" style="left:2px;top:511px;width:25px;height:1px;background:#c6c6c6;"></div>
<div class="t" style="left:2px;top:497px;width:25px;text-align:center;font-size:13px;line-height:13px;color:#222;">16</div>
<div class="t" style="left:30px;top:495px;width:162px;height:17px;overflow:hidden;font-size:13px;line-height:17px;color:#000;">Đoàn Diễm My Thủy</div>
<div class="t" style="left:195px;top:495px;width:102px;height:17px;overflow:hidden;font-size:13px;line-height:17px;color:#000;">KT.2012.065</div>
<div class="t" style="left:300px;top:495px;width:64px;height:17px;overflow:hidden;font-size:13px;line-height:17px;color:#000;">Nữ</div>
<div class="t" style="left:367px;top:495px;width:73px;height:17px;overflow:hidden;font-size:13px;line-height:17px;color:#000;">09/06/1991</div>
<div class="t" style="left:443px;top:495px;width:118px;height:17px;overflow:hidden;font-size:13px;line-height:17px;color:#000;">Công chức</div>
<div class="t" style="left:718px;top:495px;width:161px;height:17px;overflow:hidden;font-size:13px;line-height:17px;color:#000;">Kiểm toán viên chính</div>
<div class="t" style="left:882px;top:495px;width:358px;height:17px;overflow:hidden;font-size:13px;line-height:17px;color:#000;">Phòng Quản lý đầu tư</div>
<div class="t" style="left:1564px;top:495px;width:168px;height:17px;overflow:hidden;font-size:13px;line-height:17px;color:#000;">Sơ cấp</div>
<div class="t" style="left:1735px;top:495px;width:165px;height:17px;overflow:hidden;font-size:13px;line-height:17px;color:#000;">Chuyên viên chính</div>
<div class="r" style="left:2px;top:528px;width:25px;height:1px;background:#c6c6c6;"></div>
<div class="t" style="left:2px;top:514px;width:25px;text-align:center;font-size:13px;line-height:13px;color:#222;">17</div>
<div class="t" style="left:30px;top:512px;width:162px;height:17px;overflow:hidden;font-size:13px;line-height:17px;color:#000;">Lý Anh Đạo</div>
<div class="t" style="left:195px;top:512px;width:102px;height:17px;overflow:hidden;font-size:13px;line-height:17px;color:#000;">KT.2008.107</div>
<div class="t" style="left:300px;top:512px;width:64px;height:17px;overflow:hidden;font-size:13px;line-height:17px;color:#000;">Nam</div>
<div class="t" style="left:367px;top:512px;width:73px;height:17px;overflow:hidden;font-size:13px;line-height:17px;color:#000;">16/06/1973</div>
<div class="t" style="left:443px;top:512px;width:118px;height:17px;overflow:hidden;font-size:13px;line-height:17px;color:#000;">Công chức</div>
<div class="t" style="left:564px;top:512px;width:151px;height:17px;overflow:hidden;font-size:13px;line-height:17px;color:#000;">Phó trưởng phòng</div>
<div class="t" style="left:882px;top:512px;width:358px;height:17px;overflow:hidden;font-size:13px;line-height:17px;color:#000;">Phòng Tổng hợp</div>
<div class="t" style="left:1735px;top:512px;width:165px;height:17px;overflow:hidden;font-size:13px;line-height:17px;color:#000;">Chuyên viên</div>
<div class="r" style="left:2px;top:545px;width:25px;height:1px;background:#c6c6c6;"></div>
<div class="t" style="left:2px;top:531px;width:25px;text-align:center;font-size:13px;line-height:13px;color:#222;">18</div>
<div class="t" style="left:30px;top:529px;width:162px;height:17px;overflow:hidden;font-size:13px;line-height:17px;color:#000;">Phan Hải Thiện</div>
<div class="t" style="left:195px;top:529px;width:102px;height:17px;overflow:hidden;font-size:13px;line-height:17px;color:#000;">KT.2010.117</div>
<div class="t" style="left:300px;top:529px;width:64px;height:17px;overflow:hidden;font-size:13px;line-height:17px;color:#000;">Nam</div>
<div class="t" style="left:367px;top:529px;width:73px;height:17px;overflow:hidden;font-size:13px;line-height:17px;color:#000;">31/05/1999</div>
<div class="t" style="left:443px;top:529px;width:118px;height:17px;overflow:hidden;font-size:13px;line-height:17px;color:#000;">Công chức</div>
<div class="t" style="left:564px;top:529px;width:151px;height:17px;overflow:hidden;font-size:13px;line-height:17px;color:#000;">Phó trưởng phòng</div>
<div class="t" style="left:882px;top:529px;width:358px;height:17px;overflow:hidden;font-size:13px;line-height:17px;color:#000;">Phòng Tổng hợp</div>
<div class="t" style="left:1564px;top:529px;width:168px;height:17px;overflow:hidden;font-size:13px;line-height:17px;color:#000;">Sơ cấp</div>
<div class="t" style="left:1735px;top:529px;width:165px;height:17px;overflow:hidden;font-size:13px;line-height:17px;color:#000;">Chuyên viên chính</div>
<div class="r" style="left:2px;top:562px;width:25px;height:1px;background:#c6c6c6;"></div>
<div class="t" style="left:2px;top:548px;width:25px;text-align:center;font-size:13px;line-height:13px;color:#222;">19</div>
<div class="t" style="left:30px;top:546px;width:162px;height:17px;overflow:hidden;font-size:13px;line-height:17px;color:#000;">Trương Thúy Linh</div>
<div class="t" style="left:195px;top:546px;width:102px;height:17px;overflow:hidden;font-size:13px;line-height:17px;color:#000;">KT.2005.021</div>
<div class="t" style="left:300px;top:546px;width:64px;height:17px;overflow:hidden;font-size:13px;line-height:17px;color:#000;">Nữ</div>
<div class="t" style="left:367px;top:546px;width:73px;height:17px;overflow:hidden;font-size:13px;line-height:17px;color:#000;">20/02/1995</div>
<div class="t" style="left:443px;top:546px;width:118px;height:17px;overflow:hidden;font-size:13px;line-height:17px;color:#000;">Công chức</div>
<div class="t" style="left:564px;top:546px;width:151px;height:17px;overflow:hidden;font-size:13px;line-height:17px;color:#000;">Phó trưởng phòng</div>
<div class="t" style="left:882px;top:546px;width:358px;height:17px;overflow:hidden;font-size:13px;line-height:17px;color:#000;">Phòng Kiểm toán Đầu tư dự án</div>
<div class="t" style="left:1356px;top:546px;width:205px;height:17px;overflow:hidden;font-size:13px;line-height:17px;color:#000;">Thạc sĩ</div>
<div class="t" style="left:1564px;top:546px;width:168px;height:17px;overflow:hidden;font-size:13px;line-height:17px;color:#000;">Cao cấp</div>
<div class="t" style="left:1735px;top:546px;width:165px;height:17px;overflow:hidden;font-size:13px;line-height:17px;color:#000;">Chuyên viên chính</div>
<div class="r" style="left:2px;top:579px;width:25px;height:1px;background:#c6c6c6;"></div>
<div class="t" style="left:2px;top:565px;width:25px;text-align:center;font-size:13px;line-height:13px;color:#222;">20</div>
<div class="t" style="left:30px;top:563px;width:162px;height:17px;overflow:hidden;font-size:13px;line-height:17px;color:#000;">Thân Việt Vũ</div>
<div class="t" style="left:195px;top:563px;width:102px;height:17px;overflow:hidden;font-size:13px;line-height:17px;color:#000;">KT.2008.006</div>
<div class="t" style="left:300px;top:563px;width:64px;height:17px;overflow:hidden;font-size:13px;line-height:17px;color:#000;">Nam</div>
<div class="t" style="left:367px;top:563px;width:73px;height:17px;overflow:hidden;font-size:13px;line-height:17px;color:#000;">10/12/1997</div>
<div class="t" style="left:443px;top:563px;width:118px;height:17px;overflow:hidden;font-size:13px;line-height:17px;color:#000;">Công chức</div>
<div class="t" style="left:564px;top:563px;width:151px;height:17px;overflow:hidden;font-size:13px;line-height:17px;color:#000;">Phó trưởng phòng</div>
<div class="t" style="left:882px;top:563px;width:358px;height:17px;overflow:hidden;font-size:13px;line-height:17px;color:#000;">Phòng kiểm toán ngân sách 3</div>
<div class="t" style="left:1356px;top:563px;width:205px;height:17px;overflow:hidden;font-size:13px;line-height:17px;color:#000;">Thạc sĩ</div>
<div class="t" style="left:1564px;top:563px;width:168px;height:17px;overflow:hidden;font-size:13px;line-height:17px;color:#000;">Cao cấp</div>
<div class="t" style="left:1735px;top:563px;width:165px;height:17px;overflow:hidden;font-size:13px;line-height:17px;color:#000;">Chuyên viên chính</div>
<div class="r" style="left:2px;top:596px;width:25px;height:1px;background:#c6c6c6;"></div>
<div class="t" style="left:2px;top:582px;width:25px;text-align:center;font-size:13px;line-height:13px;color:#222;">21</div>
<div class="t" style="left:30px;top:580px;width:162px;height:17px;overflow:hidden;font-size:13px;line-height:17px;color:#000;">Tôn Yến Thi</div>
<div class="t" style="left:195px;top:580px;width:102px;height:17px;overflow:hidden;font-size:13px;line-height:17px;color:#000;">KT.2011.072</div>
<div class="t" style="left:300px;top:580px;width:64px;height:17px;overflow:hidden;font-size:13px;line-height:17px;color:#000;">Nữ</div>
<div class="t" style="left:367px;top:580px;width:73px;height:17px;overflow:hidden;font-size:13px;line-height:17px;color:#000;">08/08/1997</div>
<div class="t" style="left:443px;top:580px;width:118px;height:17px;overflow:hidden;font-size:13px;line-height:17px;color:#000;">Viên chức</div>
<div class="t" style="left:718px;top:580px;width:161px;height:17px;overflow:hidden;font-size:13px;line-height:17px;color:#000;">Chuyên viên</div>
<div class="t" style="left:882px;top:580px;width:358px;height:17px;overflow:hidden;font-size:13px;line-height:17px;color:#000;">Truyền thông đa phương tiện</div>
<div class="t" style="left:1356px;top:580px;width:205px;height:17px;overflow:hidden;font-size:13px;line-height:17px;color:#000;">Thạc sĩ</div>
<div class="t" style="left:1564px;top:580px;width:168px;height:17px;overflow:hidden;font-size:13px;line-height:17px;color:#000;">Sơ cấp</div>
<div class="r" style="left:2px;top:613px;width:25px;height:1px;background:#c6c6c6;"></div>
<div class="t" style="left:2px;top:599px;width:25px;text-align:center;font-size:13px;line-height:13px;color:#222;">22</div>
<div class="t" style="left:30px;top:597px;width:162px;height:17px;overflow:hidden;font-size:13px;line-height:17px;color:#000;">Lương Kim Giang</div>
<div class="t" style="left:195px;top:597px;width:102px;height:17px;overflow:hidden;font-size:13px;line-height:17px;color:#000;">KT.2012.089</div>
<div class="t" style="left:300px;top:597px;width:64px;height:17px;overflow:hidden;font-size:13px;line-height:17px;color:#000;">Nữ</div>
<div class="t" style="left:367px;top:597px;width:73px;height:17px;overflow:hidden;font-size:13px;line-height:17px;color:#000;">21/06/1966</div>
<div class="t" style="left:443px;top:597px;width:118px;height:17px;overflow:hidden;font-size:13px;line-height:17px;color:#000;">Viên chức</div>
<div class="t" style="left:564px;top:597px;width:151px;height:17px;overflow:hidden;font-size:13px;line-height:17px;color:#000;">Phó trưởng phòng</div>
<div class="t" style="left:882px;top:597px;width:358px;height:17px;overflow:hidden;font-size:13px;line-height:17px;color:#000;">Truyền thông đa phương tiện</div>
<div class="t" style="left:1356px;top:597px;width:205px;height:17px;overflow:hidden;font-size:13px;line-height:17px;color:#000;">Thạc sĩ</div>
<div class="t" style="left:1564px;top:597px;width:168px;height:17px;overflow:hidden;font-size:13px;line-height:17px;color:#000;">Cao cấp</div>
<div class="t" style="left:1735px;top:597px;width:165px;height:17px;overflow:hidden;font-size:13px;line-height:17px;color:#000;">Chuyên viên</div>
<div class="r" style="left:2px;top:630px;width:25px;height:1px;background:#c6c6c6;"></div>
<div class="t" style="left:2px;top:616px;width:25px;text-align:center;font-size:13px;line-height:13px;color:#222;">23</div>
<div class="t" style="left:30px;top:614px;width:162px;height:17px;overflow:hidden;font-size:13px;line-height:17px;color:#000;">Huỳnh Thủy My</div>
<div class="t" style="left:195px;top:614px;width:102px;height:17px;overflow:hidden;font-size:13px;line-height:17px;color:#000;">KT.2003.003</div>
<div class="t" style="left:300px;top:614px;width:64px;height:17px;overflow:hidden;font-size:13px;line-height:17px;color:#000;">Nữ</div>
<div class="t" style="left:367px;top:614px;width:73px;height:17px;overflow:hidden;font-size:13px;line-height:17px;color:#000;">15/09/1992</div>
<div class="t" style="left:443px;top:614px;width:118px;height:17px;overflow:hidden;font-size:13px;line-height:17px;color:#000;">Công chức</div>
<div class="t" style="left:564px;top:614px;width:151px;height:17px;overflow:hidden;font-size:13px;line-height:17px;color:#000;">Trưởng phòng</div>
<div class="t" style="left:882px;top:614px;width:358px;height:17px;overflow:hidden;font-size:13px;line-height:17px;color:#000;">Phòng Đa phương</div>
<div class="t" style="left:1356px;top:614px;width:205px;height:17px;overflow:hidden;font-size:13px;line-height:17px;color:#000;">Thạc sĩ</div>
<div class="t" style="left:1564px;top:614px;width:168px;height:17px;overflow:hidden;font-size:13px;line-height:17px;color:#000;">Cao cấp</div>
<div class="t" style="left:1735px;top:614px;width:165px;height:17px;overflow:hidden;font-size:13px;line-height:17px;color:#000;">Chuyên viên chính</div>
<div class="r" style="left:2px;top:647px;width:25px;height:1px;background:#c6c6c6;"></div>
<div class="t" style="left:2px;top:633px;width:25px;text-align:center;font-size:13px;line-height:13px;color:#222;">24</div>
<div class="t" style="left:30px;top:631px;width:162px;height:17px;overflow:hidden;font-size:13px;line-height:17px;color:#000;">Ngô Duy Hoàng</div>
<div class="t" style="left:195px;top:631px;width:102px;height:17px;overflow:hidden;font-size:13px;line-height:17px;color:#000;">KT.2008.071</div>
<div class="t" style="left:300px;top:631px;width:64px;height:17px;overflow:hidden;font-size:13px;line-height:17px;color:#000;">Nam</div>
<div class="t" style="left:367px;top:631px;width:73px;height:17px;overflow:hidden;font-size:13px;line-height:17px;color:#000;">04/02/1989</div>
<div class="t" style="left:443px;top:631px;width:118px;height:17px;overflow:hidden;font-size:13px;line-height:17px;color:#000;">Công chức</div>
<div class="t" style="left:718px;top:631px;width:161px;height:17px;overflow:hidden;font-size:13px;line-height:17px;color:#000;">Kiểm toán viên</div>
<div class="t" style="left:882px;top:631px;width:358px;height:17px;overflow:hidden;font-size:13px;line-height:17px;color:#000;">Phòng Tổng hợp</div>
<div class="t" style="left:1356px;top:631px;width:205px;height:17px;overflow:hidden;font-size:13px;line-height:17px;color:#000;">Cử nhân</div>
<div class="t" style="left:1564px;top:631px;width:168px;height:17px;overflow:hidden;font-size:13px;line-height:17px;color:#000;">Trung cấp</div>
<div class="t" style="left:1735px;top:631px;width:165px;height:17px;overflow:hidden;font-size:13px;line-height:17px;color:#000;">Chuyên viên chính</div>
<div class="r" style="left:2px;top:664px;width:25px;height:1px;background:#c6c6c6;"></div>
<div class="t" style="left:2px;top:650px;width:25px;text-align:center;font-size:13px;line-height:13px;color:#222;">25</div>
<div class="t" style="left:30px;top:648px;width:162px;height:17px;overflow:hidden;font-size:13px;line-height:17px;color:#000;">Hà Huy Hoàng Quý</div>
<div class="t" style="left:195px;top:648px;width:102px;height:17px;overflow:hidden;font-size:13px;line-height:17px;color:#000;">KT.2007.022</div>
<div class="t" style="left:300px;top:648px;width:64px;height:17px;overflow:hidden;font-size:13px;line-height:17px;color:#000;">Nam</div>
<div class="t" style="left:367px;top:648px;width:73px;height:17px;overflow:hidden;font-size:13px;line-height:17px;color:#000;">19/11/1976</div>
<div class="t" style="left:443px;top:648px;width:118px;height:17px;overflow:hidden;font-size:13px;line-height:17px;color:#000;">Công chức</div>
<div class="t" style="left:564px;top:648px;width:151px;height:17px;overflow:hidden;font-size:13px;line-height:17px;color:#000;">Trưởng phòng</div>
<div class="t" style="left:882px;top:648px;width:358px;height:17px;overflow:hidden;font-size:13px;line-height:17px;color:#000;">Phòng Kiểm toán đầu tư dự án 5</div>
<div class="t" style="left:1564px;top:648px;width:168px;height:17px;overflow:hidden;font-size:13px;line-height:17px;color:#000;">Cao cấp</div>
<div class="t" style="left:1735px;top:648px;width:165px;height:17px;overflow:hidden;font-size:13px;line-height:17px;color:#000;">Chuyên viên chính</div>
<div class="r" style="left:2px;top:681px;width:25px;height:1px;background:#c6c6c6;"></div>
<div class="t" style="left:2px;top:667px;width:25px;text-align:center;font-size:13px;line-height:13px;color:#222;">26</div>
<div class="t" style="left:30px;top:665px;width:162px;height:17px;overflow:hidden;font-size:13px;line-height:17px;color:#000;">Lâm Hạo Tâm</div>
<div class="t" style="left:195px;top:665px;width:102px;height:17px;overflow:hidden;font-size:13px;line-height:17px;color:#000;">KT.2004.002</div>
<div class="t" style="left:300px;top:665px;width:64px;height:17px;overflow:hidden;font-size:13px;line-height:17px;color:#000;">Nam</div>
<div class="t" style="left:367px;top:665px;width:73px;height:17px;overflow:hidden;font-size:13px;line-height:17px;color:#000;">16/03/1973</div>
<div class="t" style="left:443px;top:665px;width:118px;height:17px;overflow:hidden;font-size:13px;line-height:17px;color:#000;">Công chức</div>
<div class="t" style="left:564px;top:665px;width:151px;height:17px;overflow:hidden;font-size:13px;line-height:17px;color:#000;">Trưởng phòng</div>
<div class="t" style="left:882px;top:665px;width:358px;height:17px;overflow:hidden;font-size:13px;line-height:17px;color:#000;">Phòng Tổng hợp</div>
<div class="t" style="left:1356px;top:665px;width:205px;height:17px;overflow:hidden;font-size:13px;line-height:17px;color:#000;">Thạc sĩ</div>
<div class="t" style="left:1564px;top:665px;width:168px;height:17px;overflow:hidden;font-size:13px;line-height:17px;color:#000;">Cao cấp</div>
<div class="t" style="left:1735px;top:665px;width:165px;height:17px;overflow:hidden;font-size:13px;line-height:17px;color:#000;">Chuyên viên chính</div>
<div class="r" style="left:2px;top:698px;width:25px;height:1px;background:#c6c6c6;"></div>
<div class="t" style="left:2px;top:684px;width:25px;text-align:center;font-size:13px;line-height:13px;color:#222;">27</div>
<div class="t" style="left:30px;top:682px;width:162px;height:17px;overflow:hidden;font-size:13px;line-height:17px;color:#000;">Phùng Hồng Vân</div>
<div class="t" style="left:195px;top:682px;width:102px;height:17px;overflow:hidden;font-size:13px;line-height:17px;color:#000;">KT.2008.127</div>
<div class="t" style="left:300px;top:682px;width:64px;height:17px;overflow:hidden;font-size:13px;line-height:17px;color:#000;">Nữ</div>
<div class="t" style="left:367px;top:682px;width:73px;height:17px;overflow:hidden;font-size:13px;line-height:17px;color:#000;">24/09/1978</div>
<div class="t" style="left:443px;top:682px;width:118px;height:17px;overflow:hidden;font-size:13px;line-height:17px;color:#000;">Công chức</div>
<div class="t" style="left:564px;top:682px;width:151px;height:17px;overflow:hidden;font-size:13px;line-height:17px;color:#000;">Phó chánh văn phòng</div>
<div class="t" style="left:882px;top:682px;width:358px;height:17px;overflow:hidden;font-size:13px;line-height:17px;color:#000;">Văn phòng</div>
<div class="t" style="left:1356px;top:682px;width:205px;height:17px;overflow:hidden;font-size:13px;line-height:17px;color:#000;">Thạc sĩ</div>
<div class="t" style="left:1564px;top:682px;width:168px;height:17px;overflow:hidden;font-size:13px;line-height:17px;color:#000;">Cao cấp</div>
<div class="t" style="left:1735px;top:682px;width:165px;height:17px;overflow:hidden;font-size:13px;line-height:17px;color:#000;">Chuyên viên chính</div>
<div class="r" style="left:2px;top:715px;width:25px;height:1px;background:#c6c6c6;"></div>
<div class="t" style="left:2px;top:701px;width:25px;text-align:center;font-size:13px;line-height:13px;color:#222;">28</div>
<div class="t" style="left:30px;top:699px;width:162px;height:17px;overflow:hidden;font-size:13px;line-height:17px;color:#000;">Võ Huy Long</div>
<div class="t" style="left:195px;top:699px;width:102px;height:17px;overflow:hidden;font-size:13px;line-height:17px;color:#000;">KT.2010.253</div>
<div class="t" style="left:300px;top:699px;width:64px;height:17px;overflow:hidden;font-size:13px;line-height:17px;color:#000;">Nam</div>
<div class="t" style="left:367px;top:699px;width:73px;height:17px;overflow:hidden;font-size:13px;line-height:17px;color:#000;">23/02/1968</div>
<div class="t" style="left:443px;top:699px;width:118px;height:17px;overflow:hidden;font-size:13px;line-height:17px;color:#000;">Công chức</div>
<div class="t" style="left:564px;top:699px;width:151px;height:17px;overflow:hidden;font-size:13px;line-height:17px;color:#000;">Phó trưởng phòng</div>
<div class="t" style="left:882px;top:699px;width:358px;height:17px;overflow:hidden;font-size:13px;line-height:17px;color:#000;">Phòng Tổng hợp</div>
<div class="t" style="left:1564px;top:699px;width:168px;height:17px;overflow:hidden;font-size:13px;line-height:17px;color:#000;">Cao cấp</div>
<div class="r" style="left:2px;top:732px;width:25px;height:1px;background:#c6c6c6;"></div>
<div class="t" style="left:2px;top:718px;width:25px;text-align:center;font-size:13px;line-height:13px;color:#222;">29</div>
<div class="t" style="left:30px;top:716px;width:162px;height:17px;overflow:hidden;font-size:13px;line-height:17px;color:#000;">Chu Hạo Toàn</div>
<div class="t" style="left:195px;top:716px;width:102px;height:17px;overflow:hidden;font-size:13px;line-height:17px;color:#000;">KT.2017.014</div>
<div class="t" style="left:300px;top:716px;width:64px;height:17px;overflow:hidden;font-size:13px;line-height:17px;color:#000;">Nam</div>
<div class="t" style="left:367px;top:716px;width:73px;height:17px;overflow:hidden;font-size:13px;line-height:17px;color:#000;">20/04/1980</div>
<div class="t" style="left:443px;top:716px;width:118px;height:17px;overflow:hidden;font-size:13px;line-height:17px;color:#000;">Công chức</div>
<div class="t" style="left:718px;top:716px;width:161px;height:17px;overflow:hidden;font-size:13px;line-height:17px;color:#000;">Kiểm toán viên</div>
<div class="t" style="left:882px;top:716px;width:358px;height:17px;overflow:hidden;font-size:13px;line-height:17px;color:#000;">Phòng Kiểm toán Đầu tư dự án</div>
<div class="t" style="left:1356px;top:716px;width:205px;height:17px;overflow:hidden;font-size:13px;line-height:17px;color:#000;">Thạc sĩ</div>
<div class="t" style="left:1564px;top:716px;width:168px;height:17px;overflow:hidden;font-size:13px;line-height:17px;color:#000;">Trung cấp</div>
<div class="t" style="left:1735px;top:716px;width:165px;height:17px;overflow:hidden;font-size:13px;line-height:17px;color:#000;">Chuyên viên chính</div>
<div class="r" style="left:2px;top:749px;width:25px;height:1px;background:#c6c6c6;"></div>
<div class="t" style="left:2px;top:735px;width:25px;text-align:center;font-size:13px;line-height:13px;color:#222;">30</div>
<div class="t" style="left:30px;top:733px;width:162px;height:17px;overflow:hidden;font-size:13px;line-height:17px;color:#000;">Hồ Chí Khải</div>
<div class="t" style="left:195px;top:733px;width:102px;height:17px;overflow:hidden;font-size:13px;line-height:17px;color:#000;">KT.2014.080</div>
<div class="t" style="left:300px;top:733px;width:64px;height:17px;overflow:hidden;font-size:13px;line-height:17px;color:#000;">Nam</div>
<div class="t" style="left:367px;top:733px;width:73px;height:17px;overflow:hidden;font-size:13px;line-height:17px;color:#000;">18/09/1975</div>
<div class="t" style="left:443px;top:733px;width:118px;height:17px;overflow:hidden;font-size:13px;line-height:17px;color:#000;">Công chức</div>
<div class="t" style="left:564px;top:733px;width:151px;height:17px;overflow:hidden;font-size:13px;line-height:17px;color:#000;">Phó trưởng phòng</div>
<div class="t" style="left:882px;top:733px;width:358px;height:17px;overflow:hidden;font-size:13px;line-height:17px;color:#000;">Phòng Tổng hợp</div>
<div class="t" style="left:1564px;top:733px;width:168px;height:17px;overflow:hidden;font-size:13px;line-height:17px;color:#000;">Cao cấp</div>
<div class="t" style="left:1735px;top:733px;width:165px;height:17px;overflow:hidden;font-size:13px;line-height:17px;color:#000;">Chuyên viên chính</div>
<div class="r" style="left:2px;top:766px;width:25px;height:1px;background:#c6c6c6;"></div>
<div class="t" style="left:2px;top:752px;width:25px;text-align:center;font-size:13px;line-height:13px;color:#222;">31</div>
<div class="t" style="left:30px;top:750px;width:162px;height:17px;overflow:hidden;font-size:13px;line-height:17px;color:#000;">Võ Hoàng Minh</div>
<div class="t" style="left:195px;top:750px;width:102px;height:17px;overflow:hidden;font-size:13px;line-height:17px;color:#000;">KT.1996.018</div>
<div class="t" style="left:300px;top:750px;width:64px;height:17px;overflow:hidden;font-size:13px;line-height:17px;color:#000;">Nam</div>
<div class="t" style="left:367px;top:750px;width:73px;height:17px;overflow:hidden;font-size:13px;line-height:17px;color:#000;">14/11/1975</div>
<div class="t" style="left:443px;top:750px;width:118px;height:17px;overflow:hidden;font-size:13px;line-height:17px;color:#000;">Công chức</div>
<div class="t" style="left:564px;top:750px;width:151px;height:17px;overflow:hidden;font-size:13px;line-height:17px;color:#000;">Phó trưởng phòng</div>
<div class="t" style="left:882px;top:750px;width:358px;height:17px;overflow:hidden;font-size:13px;line-height:17px;color:#000;">Phòng Kiểm toán các tổ chức tài chính 1</div>
<div class="t" style="left:1356px;top:750px;width:205px;height:17px;overflow:hidden;font-size:13px;line-height:17px;color:#000;">Thạc sĩ</div>
<div class="t" style="left:1564px;top:750px;width:168px;height:17px;overflow:hidden;font-size:13px;line-height:17px;color:#000;">Cao cấp</div>
<div class="t" style="left:1735px;top:750px;width:165px;height:17px;overflow:hidden;font-size:13px;line-height:17px;color:#000;">Chuyên viên cao cấp</div>
<div class="r" style="left:2px;top:783px;width:25px;height:1px;background:#c6c6c6;"></div>
<div class="t" style="left:2px;top:769px;width:25px;text-align:center;font-size:13px;line-height:13px;color:#222;">32</div>
<div class="t" style="left:30px;top:767px;width:162px;height:17px;overflow:hidden;font-size:13px;line-height:17px;color:#000;">Trịnh Tài Bình</div>
<div class="t" style="left:195px;top:767px;width:102px;height:17px;overflow:hidden;font-size:13px;line-height:17px;color:#000;">KT.2014.164</div>
<div class="t" style="left:300px;top:767px;width:64px;height:17px;overflow:hidden;font-size:13px;line-height:17px;color:#000;">Nam</div>
<div class="t" style="left:367px;top:767px;width:73px;height:17px;overflow:hidden;font-size:13px;line-height:17px;color:#000;">31/03/1998</div>
<div class="t" style="left:443px;top:767px;width:118px;height:17px;overflow:hidden;font-size:13px;line-height:17px;color:#000;">Công chức</div>
<div class="t" style="left:718px;top:767px;width:161px;height:17px;overflow:hidden;font-size:13px;line-height:17px;color:#000;">Chuyên viên</div>
<div class="t" style="left:882px;top:767px;width:358px;height:17px;overflow:hidden;font-size:13px;line-height:17px;color:#000;">Phòng kiểm toán ngân sách 1</div>
<div class="t" style="left:1356px;top:767px;width:205px;height:17px;overflow:hidden;font-size:13px;line-height:17px;color:#000;">Cử nhân</div>
<div class="t" style="left:1735px;top:767px;width:165px;height:17px;overflow:hidden;font-size:13px;line-height:17px;color:#000;">Chuyên viên</div>
<div class="r" style="left:2px;top:800px;width:25px;height:1px;background:#c6c6c6;"></div>
<div class="t" style="left:2px;top:786px;width:25px;text-align:center;font-size:13px;line-height:13px;color:#222;">33</div>
<div class="t" style="left:30px;top:784px;width:162px;height:17px;overflow:hidden;font-size:13px;line-height:17px;color:#000;">Bùi Hiền Linh</div>
<div class="t" style="left:195px;top:784px;width:102px;height:17px;overflow:hidden;font-size:13px;line-height:17px;color:#000;">HĐ.2018.011</div>
<div class="t" style="left:300px;top:784px;width:64px;height:17px;overflow:hidden;font-size:13px;line-height:17px;color:#000;">Nữ</div>
<div class="t" style="left:367px;top:784px;width:73px;height:17px;overflow:hidden;font-size:13px;line-height:17px;color:#000;">08/01/1981</div>
<div class="t" style="left:443px;top:784px;width:118px;height:17px;overflow:hidden;font-size:13px;line-height:17px;color:#000;">Lao động hợp đồng</div>
<div class="t" style="left:564px;top:784px;width:151px;height:17px;overflow:hidden;font-size:13px;line-height:17px;color:#000;">Trưởng công an</div>
<div class="t" style="left:718px;top:784px;width:161px;height:17px;overflow:hidden;font-size:13px;line-height:17px;color:#000;">Phó chủ tịch Hội Nông dân</div>
<div class="t" style="left:882px;top:784px;width:358px;height:17px;overflow:hidden;font-size:13px;line-height:17px;color:#000;">Phòng Tổ chức - biên chế - tiền lương</div>
<div class="t" style="left:1356px;top:784px;width:205px;height:17px;overflow:hidden;font-size:13px;line-height:17px;color:#000;">Cử nhân</div>
<div class="r" style="left:2px;top:817px;width:25px;height:1px;background:#c6c6c6;"></div>
<div class="t" style="left:2px;top:803px;width:25px;text-align:center;font-size:13px;line-height:13px;color:#222;">34</div>
<div class="t" style="left:30px;top:801px;width:162px;height:17px;overflow:hidden;font-size:13px;line-height:17px;color:#000;">Vương Quang Hưng</div>
<div class="t" style="left:195px;top:801px;width:102px;height:17px;overflow:hidden;font-size:13px;line-height:17px;color:#000;">KT.2023.035</div>
<div class="t" style="left:300px;top:801px;width:64px;height:17px;overflow:hidden;font-size:13px;line-height:17px;color:#000;">Nam</div>
<div class="t" style="left:367px;top:801px;width:73px;height:17px;overflow:hidden;font-size:13px;line-height:17px;color:#000;">03/10/1973</div>
<div class="t" style="left:443px;top:801px;width:118px;height:17px;overflow:hidden;font-size:13px;line-height:17px;color:#000;">Công chức</div>
<div class="t" style="left:718px;top:801px;width:161px;height:17px;overflow:hidden;font-size:13px;line-height:17px;color:#000;">Chuyên viên</div>
<div class="t" style="left:882px;top:801px;width:358px;height:17px;overflow:hidden;font-size:13px;line-height:17px;color:#000;">Phòng Tổng hợp</div>
<div class="t" style="left:1356px;top:801px;width:205px;height:17px;overflow:hidden;font-size:13px;line-height:17px;color:#000;">Cử nhân</div>
<div class="t" style="left:1564px;top:801px;width:168px;height:17px;overflow:hidden;font-size:13px;line-height:17px;color:#000;">Sơ cấp</div>
<div class="r" style="left:2px;top:834px;width:25px;height:1px;background:#c6c6c6;"></div>
<div class="t" style="left:2px;top:820px;width:25px;text-align:center;font-size:13px;line-height:13px;color:#222;">35</div>
<div class="t" style="left:30px;top:818px;width:162px;height:17px;overflow:hidden;font-size:13px;line-height:17px;color:#000;">Tạ Thảo Dung</div>
<div class="t" style="left:195px;top:818px;width:102px;height:17px;overflow:hidden;font-size:13px;line-height:17px;color:#000;">KT.2008.224</div>
<div class="t" style="left:300px;top:818px;width:64px;height:17px;overflow:hidden;font-size:13px;line-height:17px;color:#000;">Nữ</div>
<div class="t" style="left:367px;top:818px;width:73px;height:17px;overflow:hidden;font-size:13px;line-height:17px;color:#000;">19/09/1992</div>
<div class="t" style="left:443px;top:818px;width:118px;height:17px;overflow:hidden;font-size:13px;line-height:17px;color:#000;">Công chức</div>
<div class="t" style="left:564px;top:818px;width:151px;height:17px;overflow:hidden;font-size:13px;line-height:17px;color:#000;">Phó trưởng phòng</div>
<div class="t" style="left:882px;top:818px;width:358px;height:17px;overflow:hidden;font-size:13px;line-height:17px;color:#000;">Phòng kiểm toán ngân sách 1</div>
<div class="t" style="left:1356px;top:818px;width:205px;height:17px;overflow:hidden;font-size:13px;line-height:17px;color:#000;">Cử nhân</div>
<div class="t" style="left:1564px;top:818px;width:168px;height:17px;overflow:hidden;font-size:13px;line-height:17px;color:#000;">Cao cấp</div>
<div class="t" style="left:1735px;top:818px;width:165px;height:17px;overflow:hidden;font-size:13px;line-height:17px;color:#000;">Chuyên viên chính</div>
<div class="r" style="left:2px;top:851px;width:25px;height:1px;background:#c6c6c6;"></div>
<div class="t" style="left:2px;top:837px;width:25px;text-align:center;font-size:13px;line-height:13px;color:#222;">36</div>
<div class="t" style="left:30px;top:835px;width:162px;height:17px;overflow:hidden;font-size:13px;line-height:17px;color:#000;">Tống Tố Thơ</div>
<div class="t" style="left:195px;top:835px;width:102px;height:17px;overflow:hidden;font-size:13px;line-height:17px;color:#000;">KT.2008.011</div>
<div class="t" style="left:300px;top:835px;width:64px;height:17px;overflow:hidden;font-size:13px;line-height:17px;color:#000;">Nữ</div>
<div class="t" style="left:367px;top:835px;width:73px;height:17px;overflow:hidden;font-size:13px;line-height:17px;color:#000;">04/10/1996</div>
<div class="t" style="left:443px;top:835px;width:118px;height:17px;overflow:hidden;font-size:13px;line-height:17px;color:#000;">Công chức</div>
<div class="t" style="left:564px;top:835px;width:151px;height:17px;overflow:hidden;font-size:13px;line-height:17px;color:#000;">Trưởng công an</div>
<div class="t" style="left:718px;top:835px;width:161px;height:17px;overflow:hidden;font-size:13px;line-height:17px;color:#000;">Phó chủ tịch Hội Nông dân</div>
<div class="t" style="left:882px;top:835px;width:358px;height:17px;overflow:hidden;font-size:13px;line-height:17px;color:#000;">Phòng kiểm toán ngân sách 1</div>
<div class="t" style="left:1356px;top:835px;width:205px;height:17px;overflow:hidden;font-size:13px;line-height:17px;color:#000;">Thạc sĩ</div>
<div class="t" style="left:1564px;top:835px;width:168px;height:17px;overflow:hidden;font-size:13px;line-height:17px;color:#000;">Trung cấp</div>
<div class="t" style="left:1735px;top:835px;width:165px;height:17px;overflow:hidden;font-size:13px;line-height:17px;color:#000;">Chuyên viên chính</div>
<div class="r" style="left:2px;top:868px;width:25px;height:1px;background:#c6c6c6;"></div>
<div class="t" style="left:2px;top:854px;width:25px;text-align:center;font-size:13px;line-height:13px;color:#222;">37</div>
<div class="t" style="left:30px;top:852px;width:162px;height:17px;overflow:hidden;font-size:13px;line-height:17px;color:#000;">Mã Tiến Dũng</div>
<div class="t" style="left:195px;top:852px;width:102px;height:17px;overflow:hidden;font-size:13px;line-height:17px;color:#000;">KT.2007.106</div>
<div class="t" style="left:300px;top:852px;width:64px;height:17px;overflow:hidden;font-size:13px;line-height:17px;color:#000;">Nam</div>
<div class="t" style="left:367px;top:852px;width:73px;height:17px;overflow:hidden;font-size:13px;line-height:17px;color:#000;">25/06/1966</div>
<div class="t" style="left:443px;top:852px;width:118px;height:17px;overflow:hidden;font-size:13px;line-height:17px;color:#000;">Công chức</div>
<div class="t" style="left:718px;top:852px;width:161px;height:17px;overflow:hidden;font-size:13px;line-height:17px;color:#000;">Kiểm toán viên chính</div>
<div class="t" style="left:882px;top:852px;width:358px;height:17px;overflow:hidden;font-size:13px;line-height:17px;color:#000;">Phòng Tổng hợp</div>
<div class="t" style="left:1356px;top:852px;width:205px;height:17px;overflow:hidden;font-size:13px;line-height:17px;color:#000;">Thạc sĩ</div>
<div class="t" style="left:1564px;top:852px;width:168px;height:17px;overflow:hidden;font-size:13px;line-height:17px;color:#000;">Trung cấp</div>
<div class="t" style="left:1735px;top:852px;width:165px;height:17px;overflow:hidden;font-size:13px;line-height:17px;color:#000;">Chuyên viên chính</div>
<div class="r" style="left:2px;top:885px;width:25px;height:1px;background:#c6c6c6;"></div>
<div class="t" style="left:2px;top:871px;width:25px;text-align:center;font-size:13px;line-height:13px;color:#222;">38</div>
<div class="t" style="left:30px;top:869px;width:162px;height:17px;overflow:hidden;font-size:13px;line-height:17px;color:#000;">Nguyễn Trúc Hạnh</div>
<div class="t" style="left:195px;top:869px;width:102px;height:17px;overflow:hidden;font-size:13px;line-height:17px;color:#000;">KT.2010.124</div>
<div class="t" style="left:300px;top:869px;width:64px;height:17px;overflow:hidden;font-size:13px;line-height:17px;color:#000;">Nữ</div>
<div class="t" style="left:367px;top:869px;width:73px;height:17px;overflow:hidden;font-size:13px;line-height:17px;color:#000;">04/05/1993</div>
<div class="t" style="left:443px;top:869px;width:118px;height:17px;overflow:hidden;font-size:13px;line-height:17px;color:#000;">Công chức</div>
<div class="t" style="left:718px;top:869px;width:161px;height:17px;overflow:hidden;font-size:13px;line-height:17px;color:#000;">Kiểm toán viên</div>
<div class="t" style="left:882px;top:869px;width:358px;height:17px;overflow:hidden;font-size:13px;line-height:17px;color:#000;">Phòng Kiểm toán Đầu tư dự án</div>
<div class="t" style="left:1356px;top:869px;width:205px;height:17px;overflow:hidden;font-size:13px;line-height:17px;color:#000;">Cử nhân</div>
<div class="t" style="left:1564px;top:869px;width:168px;height:17px;overflow:hidden;font-size:13px;line-height:17px;color:#000;">Trung cấp</div>
<div class="t" style="left:1735px;top:869px;width:165px;height:17px;overflow:hidden;font-size:13px;line-height:17px;color:#000;">Chuyên viên chính</div>
<div class="r" style="left:2px;top:902px;width:25px;height:1px;background:#c6c6c6;"></div>
<div class="t" style="left:2px;top:888px;width:25px;text-align:center;font-size:13px;line-height:13px;color:#222;">39</div>
<div class="t" style="left:30px;top:886px;width:162px;height:17px;overflow:hidden;font-size:13px;line-height:17px;color:#000;">Cao Tuệ Thịnh</div>
<div class="t" style="left:195px;top:886px;width:102px;height:17px;overflow:hidden;font-size:13px;line-height:17px;color:#000;">HĐ.2007.004</div>
<div class="t" style="left:300px;top:886px;width:64px;height:17px;overflow:hidden;font-size:13px;line-height:17px;color:#000;">Nam</div>
<div class="t" style="left:367px;top:886px;width:73px;height:17px;overflow:hidden;font-size:13px;line-height:17px;color:#000;">13/03/1965</div>
<div class="t" style="left:443px;top:886px;width:118px;height:17px;overflow:hidden;font-size:13px;line-height:17px;color:#000;">Lao động hợp đồng</div>
<div class="t" style="left:564px;top:886px;width:151px;height:17px;overflow:hidden;font-size:13px;line-height:17px;color:#000;">Trưởng công an</div>
<div class="t" style="left:718px;top:886px;width:161px;height:17px;overflow:hidden;font-size:13px;line-height:17px;color:#000;">Phó chủ tịch Hội Nông dân</div>
<div class="t" style="left:882px;top:886px;width:358px;height:17px;overflow:hidden;font-size:13px;line-height:17px;color:#000;">Phòng Quản trị</div>
<div class="t" style="left:1356px;top:886px;width:205px;height:17px;overflow:hidden;font-size:13px;line-height:17px;color:#000;">Trung cấp</div>
<div class="r" style="left:2px;top:919px;width:25px;height:1px;background:#c6c6c6;"></div>
<div class="t" style="left:2px;top:905px;width:25px;text-align:center;font-size:13px;line-height:13px;color:#222;">40</div>
<div class="t" style="left:30px;top:903px;width:162px;height:17px;overflow:hidden;font-size:13px;line-height:17px;color:#000;">Phan Thúy Kiều Lam</div>
<div class="t" style="left:195px;top:903px;width:102px;height:17px;overflow:hidden;font-size:13px;line-height:17px;color:#000;">HĐ.2011.005</div>
<div class="t" style="left:300px;top:903px;width:64px;height:17px;overflow:hidden;font-size:13px;line-height:17px;color:#000;">Nữ</div>
<div class="t" style="left:367px;top:903px;width:73px;height:17px;overflow:hidden;font-size:13px;line-height:17px;color:#000;">06/05/1999</div>
<div class="t" style="left:443px;top:903px;width:118px;height:17px;overflow:hidden;font-size:13px;line-height:17px;color:#000;">Lao động hợp đồng</div>
<div class="t" style="left:718px;top:903px;width:161px;height:17px;overflow:hidden;font-size:13px;line-height:17px;color:#000;">Nhân viên</div>
<div class="t" style="left:882px;top:903px;width:358px;height:17px;overflow:hidden;font-size:13px;line-height:17px;color:#000;">Phòng Tổng hợp</div>
<div class="t" style="left:1356px;top:903px;width:205px;height:17px;overflow:hidden;font-size:13px;line-height:17px;color:#000;">Cử nhân</div>
<div class="r" style="left:2px;top:936px;width:25px;height:1px;background:#c6c6c6;"></div>
<div class="t" style="left:2px;top:922px;width:25px;text-align:center;font-size:13px;line-height:13px;color:#222;">41</div>
<div class="t" style="left:30px;top:920px;width:162px;height:17px;overflow:hidden;font-size:13px;line-height:17px;color:#000;">Đỗ Uyên Lam</div>
<div class="t" style="left:195px;top:920px;width:102px;height:17px;overflow:hidden;font-size:13px;line-height:17px;color:#000;">KT.1997.030</div>
<div class="t" style="left:300px;top:920px;width:64px;height:17px;overflow:hidden;font-size:13px;line-height:17px;color:#000;">Nữ</div>
<div class="t" style="left:367px;top:920px;width:73px;height:17px;overflow:hidden;font-size:13px;line-height:17px;color:#000;">18/09/1998</div>
<div class="t" style="left:443px;top:920px;width:118px;height:17px;overflow:hidden;font-size:13px;line-height:17px;color:#000;">Công chức</div>
<div class="t" style="left:718px;top:920px;width:161px;height:17px;overflow:hidden;font-size:13px;line-height:17px;color:#000;">Kiểm toán viên</div>
<div class="t" style="left:882px;top:920px;width:358px;height:17px;overflow:hidden;font-size:13px;line-height:17px;color:#000;">Phòng Kiểm toán doanh nghiệp 4</div>
<div class="t" style="left:1356px;top:920px;width:205px;height:17px;overflow:hidden;font-size:13px;line-height:17px;color:#000;">Cử nhân</div>
<div class="t" style="left:1564px;top:920px;width:168px;height:17px;overflow:hidden;font-size:13px;line-height:17px;color:#000;">Trung cấp</div>
<div class="t" style="left:1735px;top:920px;width:165px;height:17px;overflow:hidden;font-size:13px;line-height:17px;color:#000;">Chuyên viên</div>
<div class="r" style="left:2px;top:953px;width:25px;height:1px;background:#c6c6c6;"></div>
<div class="t" style="left:2px;top:939px;width:25px;text-align:center;font-size:13px;line-height:13px;color:#222;">42</div>
<div class="t" style="left:30px;top:937px;width:162px;height:17px;overflow:hidden;font-size:13px;line-height:17px;color:#000;">Phạm Hạo Việt</div>
<div class="t" style="left:195px;top:937px;width:102px;height:17px;overflow:hidden;font-size:13px;line-height:17px;color:#000;">HĐ.2012.001</div>
<div class="t" style="left:300px;top:937px;width:64px;height:17px;overflow:hidden;font-size:13px;line-height:17px;color:#000;">Nam</div>
<div class="t" style="left:367px;top:937px;width:73px;height:17px;overflow:hidden;font-size:13px;line-height:17px;color:#000;">28/04/1983</div>
<div class="t" style="left:443px;top:937px;width:118px;height:17px;overflow:hidden;font-size:13px;line-height:17px;color:#000;">Lao động hợp đồng</div>
<div class="t" style="left:718px;top:937px;width:161px;height:17px;overflow:hidden;font-size:13px;line-height:17px;color:#000;">Bảo vệ</div>
<div class="t" style="left:882px;top:937px;width:358px;height:17px;overflow:hidden;font-size:13px;line-height:17px;color:#000;">Văn phòng</div>
<div class="r" style="left:2px;top:970px;width:25px;height:1px;background:#c6c6c6;"></div>
<div class="t" style="left:2px;top:956px;width:25px;text-align:center;font-size:13px;line-height:13px;color:#222;">43</div>
<div class="t" style="left:30px;top:954px;width:162px;height:17px;overflow:hidden;font-size:13px;line-height:17px;color:#000;">Diệp Yến Nhung</div>
<div class="t" style="left:195px;top:954px;width:102px;height:17px;overflow:hidden;font-size:13px;line-height:17px;color:#000;">KT.2012.045</div>
<div class="t" style="left:300px;top:954px;width:64px;height:17px;overflow:hidden;font-size:13px;line-height:17px;color:#000;">Nữ</div>
<div class="t" style="left:367px;top:954px;width:73px;height:17px;overflow:hidden;font-size:13px;line-height:17px;color:#000;">05/12/1996</div>
<div class="t" style="left:443px;top:954px;width:118px;height:17px;overflow:hidden;font-size:13px;line-height:17px;color:#000;">Công chức</div>
<div class="t" style="left:564px;top:954px;width:151px;height:17px;overflow:hidden;font-size:13px;line-height:17px;color:#000;">Phó trưởng phòng</div>
<div class="t" style="left:882px;top:954px;width:358px;height:17px;overflow:hidden;font-size:13px;line-height:17px;color:#000;">Phòng Kiểm toán Đầu tư dự án</div>
<div class="t" style="left:1356px;top:954px;width:205px;height:17px;overflow:hidden;font-size:13px;line-height:17px;color:#000;">Thạc sĩ</div>
<div class="t" style="left:1564px;top:954px;width:168px;height:17px;overflow:hidden;font-size:13px;line-height:17px;color:#000;">Cao cấp</div>
<div class="t" style="left:1735px;top:954px;width:165px;height:17px;overflow:hidden;font-size:13px;line-height:17px;color:#000;">Chuyên viên chính</div>
<div class="r" style="left:2px;top:987px;width:25px;height:1px;background:#c6c6c6;"></div>
<div class="t" style="left:2px;top:973px;width:25px;text-align:center;font-size:13px;line-height:13px;color:#222;">44</div>
<div class="t" style="left:30px;top:971px;width:162px;height:17px;overflow:hidden;font-size:13px;line-height:17px;color:#000;">Đinh Ái Linh Thư</div>
<div class="t" style="left:195px;top:971px;width:102px;height:17px;overflow:hidden;font-size:13px;line-height:17px;color:#000;">HĐ.2010.013</div>
<div class="t" style="left:300px;top:971px;width:64px;height:17px;overflow:hidden;font-size:13px;line-height:17px;color:#000;">Nữ</div>
<div class="t" style="left:367px;top:971px;width:73px;height:17px;overflow:hidden;font-size:13px;line-height:17px;color:#000;">05/09/1973</div>
<div class="t" style="left:443px;top:971px;width:118px;height:17px;overflow:hidden;font-size:13px;line-height:17px;color:#000;">Công chức</div>
<div class="t" style="left:718px;top:971px;width:161px;height:17px;overflow:hidden;font-size:13px;line-height:17px;color:#000;">Kiểm toán viên</div>
<div class="t" style="left:882px;top:971px;width:358px;height:17px;overflow:hidden;font-size:13px;line-height:17px;color:#000;">Phòng Tổng hợp</div>
<div class="t" style="left:1356px;top:971px;width:205px;height:17px;overflow:hidden;font-size:13px;line-height:17px;color:#000;">Cử nhân</div>
<div class="t" style="left:1735px;top:971px;width:165px;height:17px;overflow:hidden;font-size:13px;line-height:17px;color:#000;">Chuyên viên chính</div>
<div class="r" style="left:2px;top:1004px;width:25px;height:1px;background:#c6c6c6;"></div>
<div class="t" style="left:2px;top:990px;width:25px;text-align:center;font-size:13px;line-height:13px;color:#222;">45</div>
<div class="t" style="left:30px;top:988px;width:162px;height:17px;overflow:hidden;font-size:13px;line-height:17px;color:#000;">Đinh Minh Hải</div>
<div class="t" style="left:195px;top:988px;width:102px;height:17px;overflow:hidden;font-size:13px;line-height:17px;color:#000;">HĐ.2011.015</div>
<div class="t" style="left:300px;top:988px;width:64px;height:17px;overflow:hidden;font-size:13px;line-height:17px;color:#000;">Nam</div>
<div class="t" style="left:367px;top:988px;width:73px;height:17px;overflow:hidden;font-size:13px;line-height:17px;color:#000;">02/03/1987</div>
<div class="t" style="left:443px;top:988px;width:118px;height:17px;overflow:hidden;font-size:13px;line-height:17px;color:#000;">Công chức</div>
<div class="t" style="left:718px;top:988px;width:161px;height:17px;overflow:hidden;font-size:13px;line-height:17px;color:#000;">Chuyên viên</div>
<div class="t" style="left:882px;top:988px;width:358px;height:17px;overflow:hidden;font-size:13px;line-height:17px;color:#000;">Phòng Tổng hợp</div>
<div class="t" style="left:1564px;top:988px;width:168px;height:17px;overflow:hidden;font-size:13px;line-height:17px;color:#000;">Sơ cấp</div>
<div class="r" style="left:28px;top:273px;width:1212px;height:1px;background:#000;"></div>
<div class="r" style="left:1240px;top:273px;width:113px;height:1px;background:#000;"></div>
<div class="r" style="left:1353px;top:273px;width:547px;height:1px;background:#000;"></div>
<div class="r" style="left:28px;top:290px;width:1212px;height:1px;background:#000;"></div>
<div class="r" style="left:1240px;top:290px;width:113px;height:1px;background:#d4d4d4;"></div>
<div class="r" style="left:1353px;top:290px;width:547px;height:1px;background:#000;"></div>
<div class="r" style="left:28px;top:307px;width:1212px;height:1px;background:#000;"></div>
<div class="r" style="left:1240px;top:307px;width:113px;height:1px;background:#d4d4d4;"></div>
<div class="r" style="left:1353px;top:307px;width:547px;height:1px;background:#000;"></div>
<div class="r" style="left:28px;top:324px;width:1212px;height:1px;background:#000;"></div>
<div class="r" style="left:1240px;top:324px;width:113px;height:1px;background:#d4d4d4;"></div>
<div class="r" style="left:1353px;top:324px;width:547px;height:1px;background:#000;"></div>
<div class="r" style="left:28px;top:341px;width:1212px;height:1px;background:#000;"></div>
<div class="r" style="left:1240px;top:341px;width:113px;height:1px;background:#d4d4d4;"></div>
<div class="r" style="left:1353px;top:341px;width:547px;height:1px;background:#000;"></div>
<div class="r" style="left:28px;top:358px;width:1212px;height:1px;background:#000;"></div>
<div class="r" style="left:1240px;top:358px;width:113px;height:1px;background:#d4d4d4;"></div>
<div class="r" style="left:1353px;top:358px;width:547px;height:1px;background:#000;"></div>
<div class="r" style="left:28px;top:375px;width:1212px;height:1px;background:#000;"></div>
<div class="r" style="left:1240px;top:375px;width:113px;height:1px;background:#d4d4d4;"></div>
<div class="r" style="left:1353px;top:375px;width:547px;height:1px;background:#000;"></div>
<div class="r" style="left:28px;top:392px;width:1212px;height:1px;background:#000;"></div>
<div class="r" style="left:1240px;top:392px;width:113px;height:1px;background:#d4d4d4;"></div>
<div class="r" style="left:1353px;top:392px;width:547px;height:1px;background:#000;"></div>
<div class="r" style="left:28px;top:409px;width:1212px;height:1px;background:#000;"></div>
<div class="r" style="left:1240px;top:409px;width:113px;height:1px;background:#d4d4d4;"></div>
<div class="r" style="left:1353px;top:409px;width:547px;height:1px;background:#000;"></div>
<div class="r" style="left:28px;top:426px;width:1212px;height:1px;background:#000;"></div>
<div class="r" style="left:1240px;top:426px;width:113px;height:1px;background:#d4d4d4;"></div>
<div class="r" style="left:1353px;top:426px;width:547px;height:1px;background:#000;"></div>
<div class="r" style="left:28px;top:443px;width:1212px;height:1px;background:#000;"></div>
<div class="r" style="left:1240px;top:443px;width:113px;height:1px;background:#d4d4d4;"></div>
<div class="r" style="left:1353px;top:443px;width:547px;height:1px;background:#000;"></div>
<div class="r" style="left:28px;top:460px;width:1212px;height:1px;background:#000;"></div>
<div class="r" style="left:1240px;top:460px;width:113px;height:1px;background:#d4d4d4;"></div>
<div class="r" style="left:1353px;top:460px;width:547px;height:1px;background:#000;"></div>
<div class="r" style="left:28px;top:477px;width:1212px;height:1px;background:#000;"></div>
<div class="r" style="left:1240px;top:477px;width:113px;height:1px;background:#d4d4d4;"></div>
<div class="r" style="left:1353px;top:477px;width:547px;height:1px;background:#000;"></div>
<div class="r" style="left:28px;top:494px;width:1212px;height:1px;background:#000;"></div>
<div class="r" style="left:1240px;top:494px;width:113px;height:1px;background:#d4d4d4;"></div>
<div class="r" style="left:1353px;top:494px;width:547px;height:1px;background:#000;"></div>
<div class="r" style="left:28px;top:511px;width:1212px;height:1px;background:#000;"></div>
<div class="r" style="left:1240px;top:511px;width:113px;height:1px;background:#d4d4d4;"></div>
<div class="r" style="left:1353px;top:511px;width:547px;height:1px;background:#000;"></div>
<div class="r" style="left:28px;top:528px;width:1212px;height:1px;background:#000;"></div>
<div class="r" style="left:1240px;top:528px;width:113px;height:1px;background:#d4d4d4;"></div>
<div class="r" style="left:1353px;top:528px;width:547px;height:1px;background:#000;"></div>
<div class="r" style="left:28px;top:545px;width:1212px;height:1px;background:#000;"></div>
<div class="r" style="left:1240px;top:545px;width:113px;height:1px;background:#d4d4d4;"></div>
<div class="r" style="left:1353px;top:545px;width:547px;height:1px;background:#000;"></div>
<div class="r" style="left:28px;top:562px;width:1212px;height:1px;background:#000;"></div>
<div class="r" style="left:1240px;top:562px;width:113px;height:1px;background:#d4d4d4;"></div>
<div class="r" style="left:1353px;top:562px;width:547px;height:1px;background:#000;"></div>
<div class="r" style="left:28px;top:579px;width:1212px;height:1px;background:#000;"></div>
<div class="r" style="left:1240px;top:579px;width:113px;height:1px;background:#d4d4d4;"></div>
<div class="r" style="left:1353px;top:579px;width:547px;height:1px;background:#000;"></div>
<div class="r" style="left:28px;top:596px;width:1212px;height:1px;background:#000;"></div>
<div class="r" style="left:1240px;top:596px;width:113px;height:1px;background:#d4d4d4;"></div>
<div class="r" style="left:1353px;top:596px;width:547px;height:1px;background:#000;"></div>
<div class="r" style="left:28px;top:613px;width:1212px;height:1px;background:#000;"></div>
<div class="r" style="left:1240px;top:613px;width:113px;height:1px;background:#d4d4d4;"></div>
<div class="r" style="left:1353px;top:613px;width:547px;height:1px;background:#000;"></div>
<div class="r" style="left:28px;top:630px;width:1212px;height:1px;background:#000;"></div>
<div class="r" style="left:1240px;top:630px;width:113px;height:1px;background:#d4d4d4;"></div>
<div class="r" style="left:1353px;top:630px;width:547px;height:1px;background:#000;"></div>
<div class="r" style="left:28px;top:647px;width:1212px;height:1px;background:#000;"></div>
<div class="r" style="left:1240px;top:647px;width:113px;height:1px;background:#d4d4d4;"></div>
<div class="r" style="left:1353px;top:647px;width:547px;height:1px;background:#000;"></div>
<div class="r" style="left:28px;top:664px;width:1212px;height:1px;background:#000;"></div>
<div class="r" style="left:1240px;top:664px;width:113px;height:1px;background:#d4d4d4;"></div>
<div class="r" style="left:1353px;top:664px;width:547px;height:1px;background:#000;"></div>
<div class="r" style="left:28px;top:681px;width:1212px;height:1px;background:#000;"></div>
<div class="r" style="left:1240px;top:681px;width:113px;height:1px;background:#d4d4d4;"></div>
<div class="r" style="left:1353px;top:681px;width:547px;height:1px;background:#000;"></div>
<div class="r" style="left:28px;top:698px;width:1212px;height:1px;background:#000;"></div>
<div class="r" style="left:1240px;top:698px;width:113px;height:1px;background:#d4d4d4;"></div>
<div class="r" style="left:1353px;top:698px;width:547px;height:1px;background:#000;"></div>
<div class="r" style="left:28px;top:715px;width:1212px;height:1px;background:#000;"></div>
<div class="r" style="left:1240px;top:715px;width:113px;height:1px;background:#d4d4d4;"></div>
<div class="r" style="left:1353px;top:715px;width:547px;height:1px;background:#000;"></div>
<div class="r" style="left:28px;top:732px;width:1212px;height:1px;background:#000;"></div>
<div class="r" style="left:1240px;top:732px;width:113px;height:1px;background:#d4d4d4;"></div>
<div class="r" style="left:1353px;top:732px;width:547px;height:1px;background:#000;"></div>
<div class="r" style="left:28px;top:749px;width:1212px;height:1px;background:#000;"></div>
<div class="r" style="left:1240px;top:749px;width:113px;height:1px;background:#d4d4d4;"></div>
<div class="r" style="left:1353px;top:749px;width:547px;height:1px;background:#000;"></div>
<div class="r" style="left:28px;top:766px;width:1212px;height:1px;background:#000;"></div>
<div class="r" style="left:1240px;top:766px;width:113px;height:1px;background:#d4d4d4;"></div>
<div class="r" style="left:1353px;top:766px;width:547px;height:1px;background:#000;"></div>
<div class="r" style="left:28px;top:783px;width:1212px;height:1px;background:#000;"></div>
<div class="r" style="left:1240px;top:783px;width:113px;height:1px;background:#d4d4d4;"></div>
<div class="r" style="left:1353px;top:783px;width:547px;height:1px;background:#000;"></div>
<div class="r" style="left:28px;top:800px;width:1212px;height:1px;background:#000;"></div>
<div class="r" style="left:1240px;top:800px;width:113px;height:1px;background:#d4d4d4;"></div>
<div class="r" style="left:1353px;top:800px;width:547px;height:1px;background:#000;"></div>
<div class="r" style="left:28px;top:817px;width:1212px;height:1px;background:#000;"></div>
<div class="r" style="left:1240px;top:817px;width:113px;height:1px;background:#d4d4d4;"></div>
<div class="r" style="left:1353px;top:817px;width:547px;height:1px;background:#000;"></div>
<div class="r" style="left:28px;top:834px;width:1212px;height:1px;background:#000;"></div>
<div class="r" style="left:1240px;top:834px;width:113px;height:1px;background:#d4d4d4;"></div>
<div class="r" style="left:1353px;top:834px;width:547px;height:1px;background:#000;"></div>
<div class="r" style="left:28px;top:851px;width:1212px;height:1px;background:#000;"></div>
<div class="r" style="left:1240px;top:851px;width:113px;height:1px;background:#d4d4d4;"></div>
<div class="r" style="left:1353px;top:851px;width:547px;height:1px;background:#000;"></div>
<div class="r" style="left:28px;top:868px;width:1212px;height:1px;background:#000;"></div>
<div class="r" style="left:1240px;top:868px;width:113px;height:1px;background:#d4d4d4;"></div>
<div class="r" style="left:1353px;top:868px;width:547px;height:1px;background:#000;"></div>
<div class="r" style="left:28px;top:885px;width:1212px;height:1px;background:#000;"></div>
<div class="r" style="left:1240px;top:885px;width:113px;height:1px;background:#d4d4d4;"></div>
<div class="r" style="left:1353px;top:885px;width:547px;height:1px;background:#000;"></div>
<div class="r" style="left:28px;top:902px;width:1212px;height:1px;background:#000;"></div>
<div class="r" style="left:1240px;top:902px;width:113px;height:1px;background:#d4d4d4;"></div>
<div class="r" style="left:1353px;top:902px;width:547px;height:1px;background:#000;"></div>
<div class="r" style="left:28px;top:919px;width:1212px;height:1px;background:#000;"></div>
<div class="r" style="left:1240px;top:919px;width:113px;height:1px;background:#d4d4d4;"></div>
<div class="r" style="left:1353px;top:919px;width:547px;height:1px;background:#000;"></div>
<div class="r" style="left:28px;top:936px;width:1212px;height:1px;background:#000;"></div>
<div class="r" style="left:1240px;top:936px;width:113px;height:1px;background:#d4d4d4;"></div>
<div class="r" style="left:1353px;top:936px;width:547px;height:1px;background:#000;"></div>
<div class="r" style="left:28px;top:953px;width:1212px;height:1px;background:#000;"></div>
<div class="r" style="left:1240px;top:953px;width:113px;height:1px;background:#d4d4d4;"></div>
<div class="r" style="left:1353px;top:953px;width:547px;height:1px;background:#000;"></div>
<div class="r" style="left:28px;top:970px;width:1212px;height:1px;background:#000;"></div>
<div class="r" style="left:1240px;top:970px;width:113px;height:1px;background:#d4d4d4;"></div>
<div class="r" style="left:1353px;top:970px;width:547px;height:1px;background:#000;"></div>
<div class="r" style="left:28px;top:987px;width:1212px;height:1px;background:#000;"></div>
<div class="r" style="left:1240px;top:987px;width:113px;height:1px;background:#d4d4d4;"></div>
<div class="r" style="left:1353px;top:987px;width:547px;height:1px;background:#000;"></div>
<div class="r" style="left:28px;top:1004px;width:1212px;height:1px;background:#000;"></div>
<div class="r" style="left:1240px;top:1004px;width:113px;height:1px;background:#d4d4d4;"></div>
<div class="r" style="left:1353px;top:1004px;width:547px;height:1px;background:#000;"></div>
<div class="r" style="left:192px;top:233px;width:1px;height:759px;background:#000;"></div>
<div class="r" style="left:297px;top:233px;width:1px;height:759px;background:#000;"></div>
<div class="r" style="left:364px;top:233px;width:1px;height:759px;background:#000;"></div>
<div class="r" style="left:440px;top:233px;width:1px;height:759px;background:#000;"></div>
<div class="r" style="left:561px;top:233px;width:1px;height:759px;background:#000;"></div>
<div class="r" style="left:715px;top:233px;width:1px;height:759px;background:#000;"></div>
<div class="r" style="left:879px;top:233px;width:1px;height:759px;background:#000;"></div>
<div class="r" style="left:1240px;top:233px;width:1px;height:759px;background:#000;"></div>
<div class="r" style="left:1353px;top:233px;width:1px;height:759px;background:#000;"></div>
<div class="r" style="left:1561px;top:233px;width:1px;height:759px;background:#000;"></div>
<div class="r" style="left:1732px;top:233px;width:1px;height:759px;background:#000;"></div>
<div class="r" style="left:26px;top:213px;width:1874px;height:2px;background:#0e6b36;"></div>
<div class="r" style="left:26px;top:231px;width:1874px;height:2px;background:#0e6b36;"></div>
<div class="r" style="left:26px;top:213px;width:2px;height:20px;background:#0e6b36;"></div>
<div class="r" style="left:1900px;top:198px;width:21px;height:794px;background:#e6e6e6;"></div>
<div class="r" style="left:1900px;top:213px;width:1px;height:779px;background:#a0a0a0;"></div>
<div class="r" style="left:1904px;top:200px;width:15px;height:792px;background:#dadada;"></div>
<div class="r" style="left:1904px;top:200px;width:15px;height:15px;background:#fff;box-sizing:border-box;border:1px solid #ababab;"></div>
<svg class="s" style="left:1907px;top:204px;" width="9" height="6" viewBox="0 0 9 6"><polygon points="4.5,0.5 8.5,5 0.5,5" fill="#6a6a6a"/></svg>
<div class="r" style="left:1904px;top:215px;width:15px;height:18px;background:#fff;box-sizing:border-box;border:1px solid #ababab;"></div>
<div class="r" style="left:1904px;top:978px;width:15px;height:14px;background:#fff;box-sizing:border-box;border:1px solid #ababab;"></div>
<svg class="s" style="left:1907px;top:983px;" width="9" height="6" viewBox="0 0 9 6"><polygon points="0.5,0.5 8.5,0.5 4.5,5" fill="#6a6a6a"/></svg>
<div class="r" style="left:2px;top:992px;width:1919px;height:13px;background:#e6e6e6;"></div>
<div class="r" style="left:2px;top:992px;width:101px;height:1px;background:#a0a0a0;"></div>
<div class="r" style="left:102px;top:992px;width:1px;height:13px;background:#a0a0a0;"></div>
<div class="r" style="left:161px;top:992px;width:1760px;height:1px;background:#a0a0a0;"></div>
<div class="r" style="left:161px;top:992px;width:1px;height:13px;background:#a0a0a0;"></div>
<div class="r" style="left:103px;top:992px;width:58px;height:13px;background:#ffffff;"></div>
<div class="t" style="left:114.5px;top:998.50px;font-size:13px;line-height:13px;color:#217346;font-weight:bold;font-family:'Liberation Sans', sans-serif;font-style:normal;">Ho so</div>
<svg class="s" style="left:28px;top:999px;" width="6" height="7" viewBox="0 0 6 7"><polygon points="5.5,0 5.5,7 0,7" fill="#c4c4c4"/></svg>
<svg class="s" style="left:57px;top:999px;" width="6" height="7" viewBox="0 0 6 7"><polygon points="0.5,0 0.5,7 6,7" fill="#c4c4c4"/></svg>
<svg class="s" style="left:195px;top:998px;" width="17" height="8" viewBox="0 0 17 8"><circle cx="8" cy="8" r="7.5" fill="none" stroke="#7a7a7a" stroke-width="1"/><rect x="7.5" y="4" width="1.2" height="4" fill="#7a7a7a"/></svg>
<div class="r" style="left:1154px;top:1001px;width:2px;height:2px;background:#b0b0b0;"></div>
<div class="r" style="left:1171px;top:999px;width:15px;height:6px;background:#ffffff;box-sizing:border-box;border:1px solid #c6c6c6;border-bottom:none;"></div>
<div class="r" style="left:1186px;top:999px;width:538px;height:6px;background:#ffffff;box-sizing:border-box;border:1px solid #c6c6c6;border-bottom:none;"></div>
<div class="r" style="left:1724px;top:999px;width:162px;height:6px;background:#dadada;"></div>
<div class="r" style="left:1886px;top:999px;width:14px;height:6px;background:#ffffff;box-sizing:border-box;border:1px solid #c6c6c6;border-bottom:none;"></div>
<div class="r" style="left:0px;top:1005px;width:1923px;height:2px;background:#a9a9a9;"></div>
</body></html>
